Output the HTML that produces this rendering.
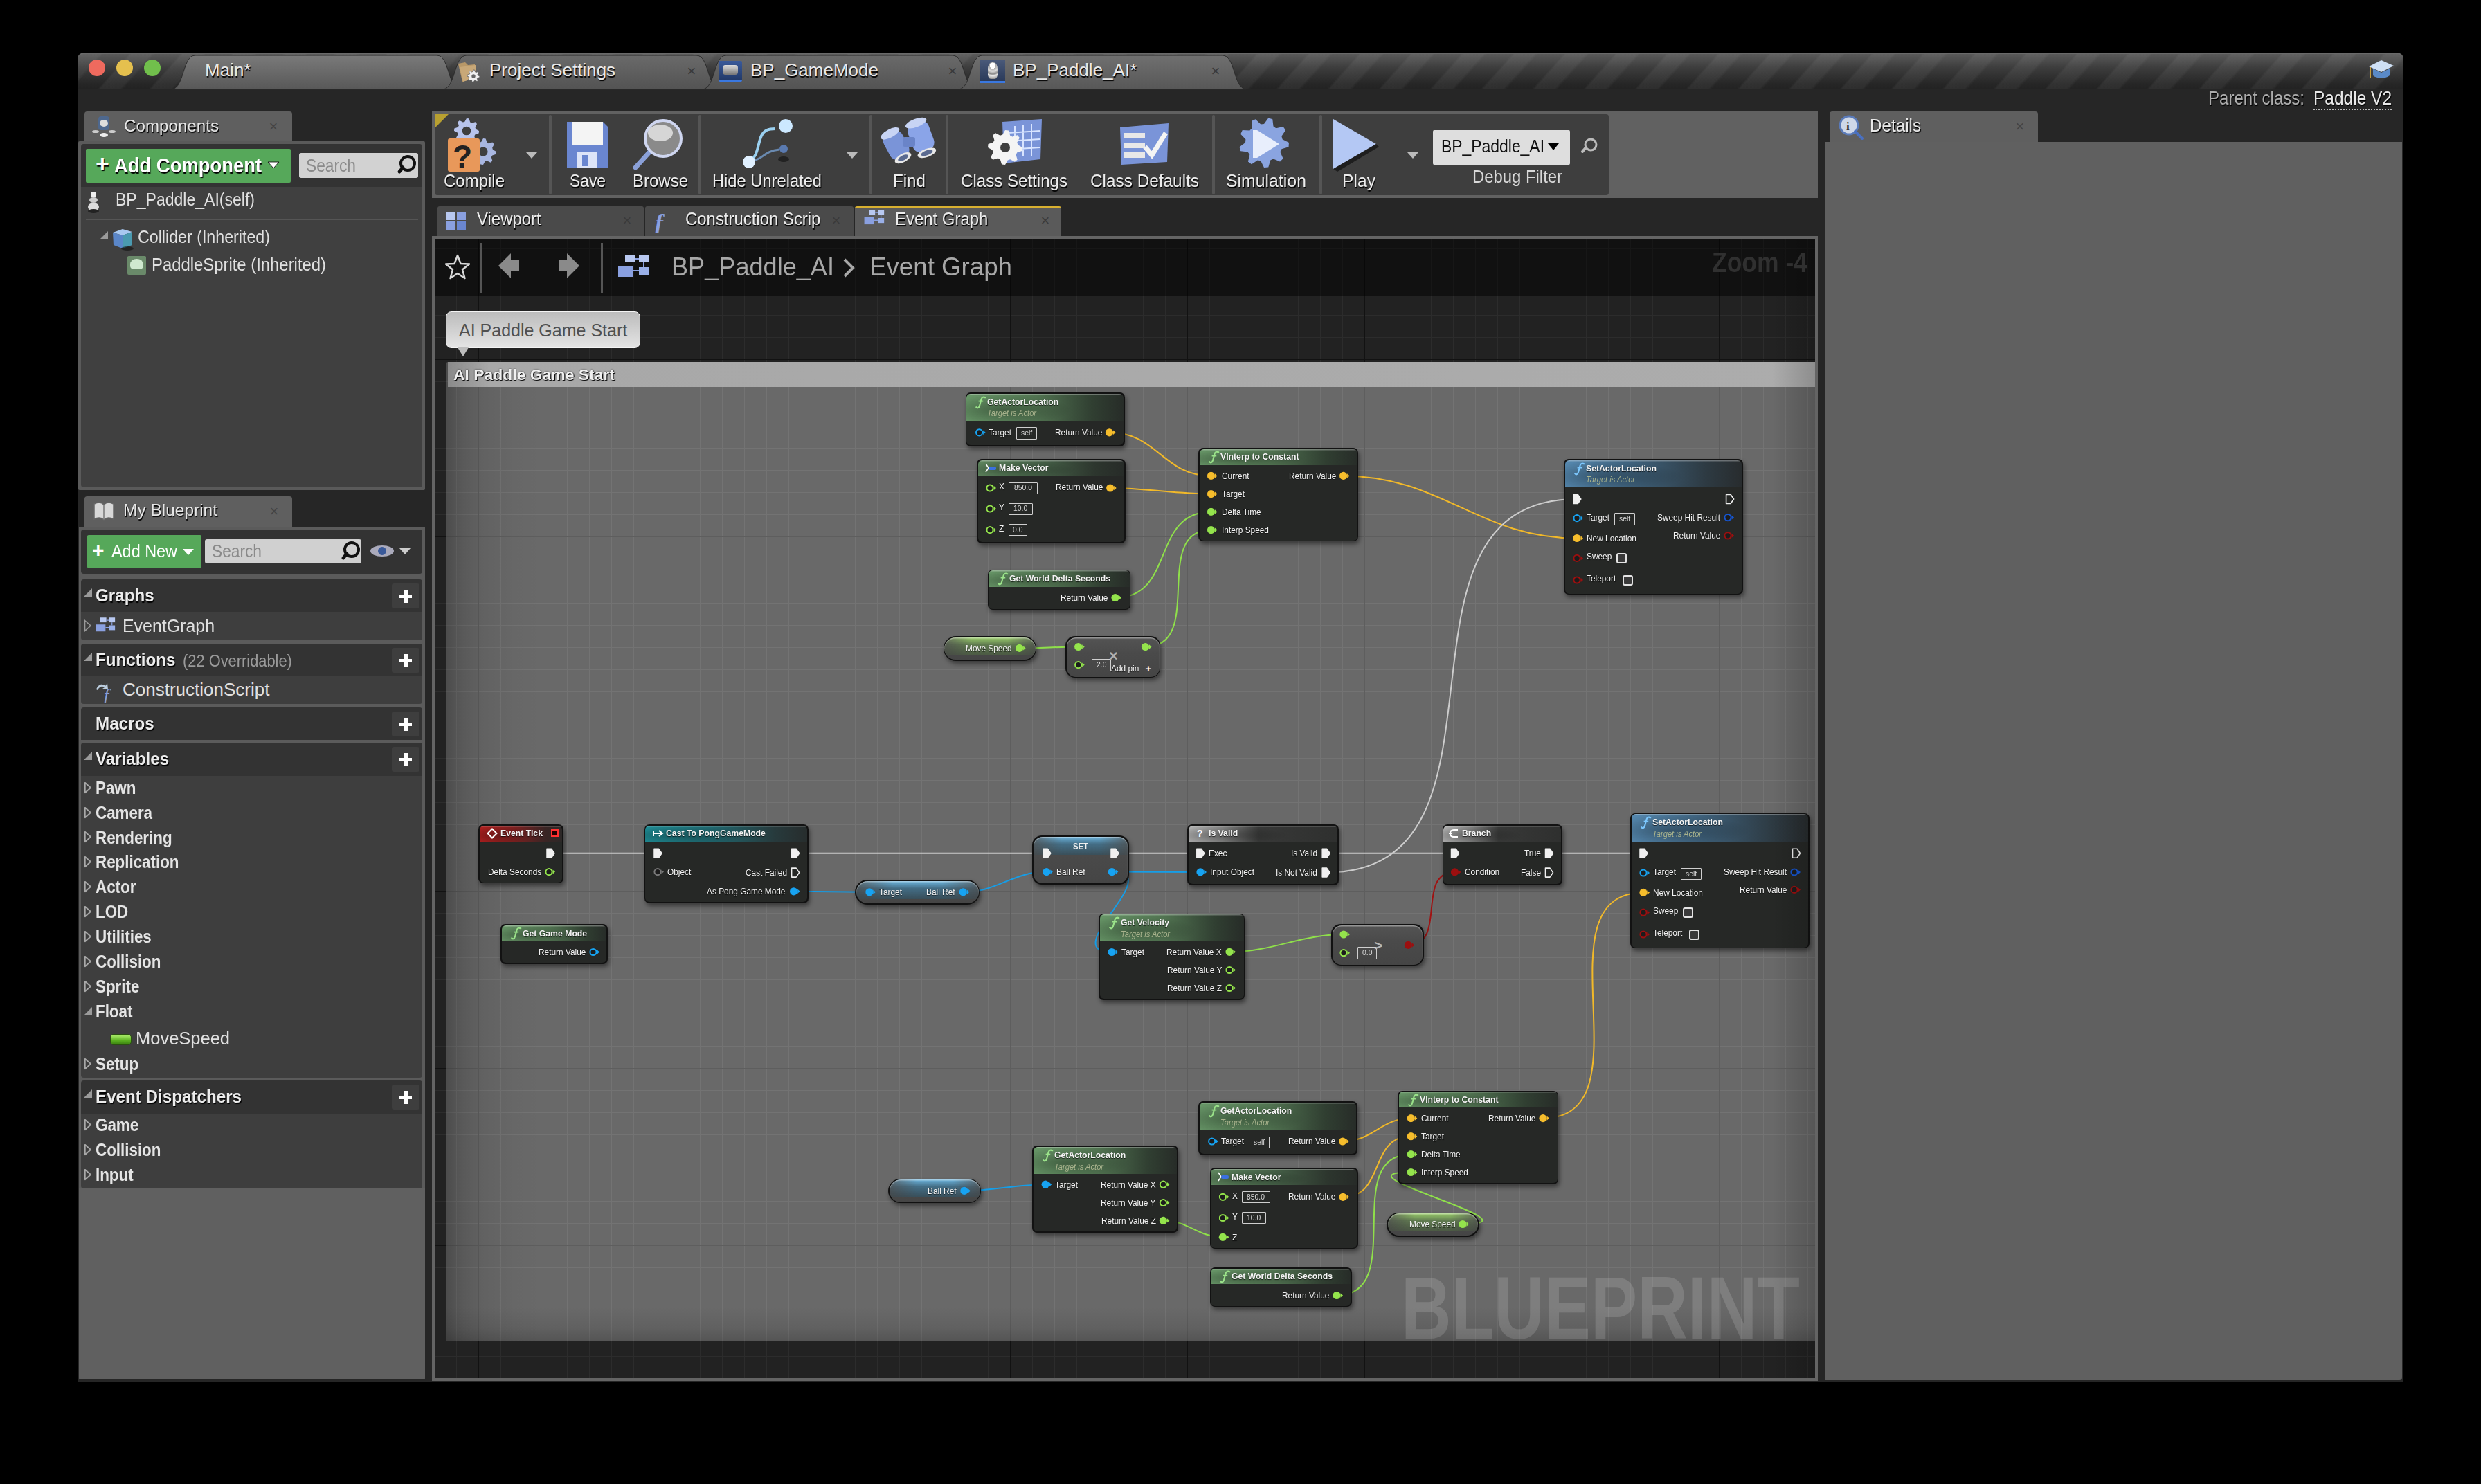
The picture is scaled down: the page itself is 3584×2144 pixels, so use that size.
<!DOCTYPE html><html><head><meta charset="utf-8"><style>html,body{margin:0;padding:0;background:#000;width:3584px;height:2144px;overflow:hidden;}body{position:relative;font-family:"Liberation Sans",sans-serif;}</style></head><body><div style="position:absolute;left:112.0px;top:76.0px;width:3360.0px;height:1920.0px;background:#262626;border-radius:9px 9px 0 0;overflow:hidden;"></div><div style="position:absolute;left:112.0px;top:76.0px;width:3360.0px;height:53.0px;border-radius:9px 9px 0 0;background:repeating-linear-gradient(132deg, rgba(255,255,255,0) 0px, rgba(255,255,255,0.055) 3px, rgba(255,255,255,0.05) 24px, rgba(255,255,255,0) 28px, rgba(255,255,255,0) 55px),linear-gradient(#5a5a5a,#3c3c3c 40%,#262626 85%,#222);border-top:2px solid #6a6a6a;box-sizing:border-box;"></div><div style="position:absolute;left:128.0px;top:86.0px;width:24.0px;height:24.0px;background:#ef6a5e;border-radius:50%;"></div><div style="position:absolute;left:168.0px;top:86.0px;width:24.0px;height:24.0px;background:#e5c04e;border-radius:50%;"></div><div style="position:absolute;left:208.0px;top:86.0px;width:24.0px;height:24.0px;background:#71bf4c;border-radius:50%;"></div><svg style="position:absolute;left:0;top:0" width="3584" height="140"><defs><linearGradient id="tg248" x1="0" y1="0" x2="0" y2="1"><stop offset="0" stop-color="#7a7a7a"/><stop offset="1" stop-color="#585858"/></linearGradient></defs><path d="M248.0,129 C266.7,127 263.3,80 282.0,80 L631.0,80 C649.7,80 646.3,127 665.0,129 Z" fill="url(#tg248)" stroke="#2a2a2a" stroke-width="1"/></svg><div style="position:absolute;left:296.0px;top:87.0px;font-size:26.00px;line-height:29.90px;font-weight:normal;font-style:normal;color:#e8e8e8;white-space:nowrap;text-shadow:1px 2px 1px #000;">Main*</div><svg style="position:absolute;left:0;top:0" width="3584" height="140"><defs><linearGradient id="tg640" x1="0" y1="0" x2="0" y2="1"><stop offset="0" stop-color="#6a6a6a"/><stop offset="1" stop-color="#535353"/></linearGradient></defs><path d="M640.0,129 C658.7,127 655.3,80 674.0,80 L1006.0,80 C1024.7,80 1021.3,127 1040.0,129 Z" fill="url(#tg640)" stroke="#2a2a2a" stroke-width="1"/></svg><svg style="position:absolute;left:660px;top:88px" width="36" height="34"><path d="M2,4 L12,2 L16,6 L26,5 L27,24 L8,30 Z" fill="#b89868"/><path d="M4,9 L27,6 L28,24 L9,30 Z" fill="#c8a878"/><path d="M33.0,22.0 L32.8,23.8 L30.0,24.5 L29.4,25.6 L30.4,28.4 L29.0,29.5 L26.5,28.0 L25.3,28.4 L24.0,31.0 L22.2,30.8 L21.5,28.0 L20.4,27.4 L17.6,28.4 L16.5,27.0 L18.0,24.5 L17.6,23.3 L15.0,22.0 L15.2,20.2 L18.0,19.5 L18.6,18.4 L17.6,15.6 L19.0,14.5 L21.5,16.0 L22.7,15.6 L24.0,13.0 L25.8,13.2 L26.5,16.0 L27.6,16.6 L30.4,15.6 L31.5,17.0 L30.0,19.5 L30.4,20.7 Z" fill="#f0f0f0" stroke="#555" stroke-width="0.8"/><circle cx="24.0" cy="22.0" r="2.7" fill="#666"/></svg><div style="position:absolute;left:707.0px;top:87.0px;font-size:26.00px;line-height:29.90px;font-weight:normal;font-style:normal;color:#e8e8e8;white-space:nowrap;text-shadow:1px 2px 1px #000;">Project Settings</div><div style="position:absolute;left:992.6px;top:90.3px;font-size:22.00px;line-height:25.30px;font-weight:normal;font-style:normal;color:#3a3a3a;white-space:nowrap;">×</div><svg style="position:absolute;left:0;top:0" width="3584" height="140"><defs><linearGradient id="tg1015" x1="0" y1="0" x2="0" y2="1"><stop offset="0" stop-color="#6a6a6a"/><stop offset="1" stop-color="#535353"/></linearGradient></defs><path d="M1015.0,129 C1033.7,127 1030.3,80 1049.0,80 L1376.0,80 C1394.7,80 1391.3,127 1410.0,129 Z" fill="url(#tg1015)" stroke="#2a2a2a" stroke-width="1"/></svg><div style="position:absolute;left:1038.0px;top:88.0px;width:34.0px;height:30.0px;background:linear-gradient(#3a5a9a,#223a6a);border-radius:2px;border-bottom:3px solid #3a78e0;box-sizing:border-box;"><div style="position:absolute;left:6.0px;top:6.0px;width:22.0px;height:14.0px;background:linear-gradient(#ddd,#777);border-radius:4px;"></div></div><div style="position:absolute;left:1084.0px;top:87.0px;font-size:26.00px;line-height:29.90px;font-weight:normal;font-style:normal;color:#e8e8e8;white-space:nowrap;text-shadow:1px 2px 1px #000;">BP_GameMode</div><div style="position:absolute;left:1369.6px;top:90.3px;font-size:22.00px;line-height:25.30px;font-weight:normal;font-style:normal;color:#3a3a3a;white-space:nowrap;">×</div><svg style="position:absolute;left:0;top:0" width="3584" height="140"><defs><linearGradient id="tg1385" x1="0" y1="0" x2="0" y2="1"><stop offset="0" stop-color="#707070"/><stop offset="1" stop-color="#575757"/></linearGradient></defs><path d="M1385.0,129 C1403.7,127 1400.3,80 1419.0,80 L1766.0,80 C1784.7,80 1781.3,127 1800.0,129 Z" fill="url(#tg1385)" stroke="#2a2a2a" stroke-width="1"/></svg><div style="position:absolute;left:1416.0px;top:86.0px;width:36.0px;height:34.0px;background:linear-gradient(#4a5a7a,#2a3a5a);border-bottom:3px solid #3a78e0;box-sizing:border-box;"><div style="position:absolute;left:11.0px;top:4.0px;width:14.0px;height:24.0px;background:radial-gradient(circle at 50% 20%,#fff 20%,#aaa 22%,#ddd 40%,#888 60%,#eee 70%,#777 100%);border-radius:40% 40% 30% 30%;"></div></div><div style="position:absolute;left:1463.0px;top:87.0px;font-size:26.00px;line-height:29.90px;font-weight:normal;font-style:normal;color:#e8e8e8;white-space:nowrap;text-shadow:1px 2px 1px #000;">BP_Paddle_AI*</div><div style="position:absolute;left:1749.6px;top:90.3px;font-size:22.00px;line-height:25.30px;font-weight:normal;font-style:normal;color:#3a3a3a;white-space:nowrap;">×</div><svg style="position:absolute;left:3418px;top:82px" width="42" height="36"><path d="M4,14 L22,5 L40,13 L22,22 Z" fill="#cfe0f5"/><path d="M10,17 L10,27 C16,32 28,32 34,27 L34,17 L22,23 Z" fill="#5a8ac8"/><path d="M6,15 L6,31" stroke="#c8a040" stroke-width="2"/></svg><div style="position:absolute;left:3190.0px;top:125.9px;font-size:28.00px;line-height:32.20px;font-weight:normal;font-style:normal;color:#acacac;white-space:nowrap;transform:scaleX(0.8588);transform-origin:0 50%;text-shadow:1px 2px 1px #000;">Parent class:</div><div style="position:absolute;left:3342.0px;top:125.9px;font-size:28.00px;line-height:32.20px;font-weight:normal;font-style:normal;color:#e8e8e8;white-space:nowrap;transform:scaleX(0.8745);transform-origin:0 50%;text-shadow:1px 2px 1px #000;">Paddle V2</div><div style="position:absolute;left:3342.0px;top:157.0px;width:113.0px;height:1.0px;border-top:2px dotted #bbb;"></div><div style="position:absolute;left:122.0px;top:161.0px;width:300.0px;height:44.0px;background:#5f5f5f;border-radius:4px 4px 0 0;"></div><svg style="position:absolute;left:132px;top:166px" width="36" height="36"><rect x="10" y="2" width="16" height="20" rx="4" fill="#4a6a9a" opacity="0.8"/><ellipse cx="18" cy="12" rx="6" ry="5" fill="#ddd"/><ellipse cx="18" cy="29" rx="6" ry="3" fill="#eee"/><ellipse cx="6" cy="24" rx="5" ry="2" fill="#ccc"/><ellipse cx="30" cy="24" rx="5" ry="2" fill="#ccc"/></svg><div style="position:absolute;left:179.0px;top:168.2px;font-size:24.00px;line-height:27.60px;font-weight:normal;font-style:normal;color:#e6e6e6;white-space:nowrap;transform:scaleX(1.0067);transform-origin:0 50%;text-shadow:1px 2px 1px #000;">Components</div><div style="position:absolute;left:388.6px;top:170.3px;font-size:22.00px;line-height:25.30px;font-weight:normal;font-style:normal;color:#444;white-space:nowrap;">×</div><div style="position:absolute;left:113.0px;top:204.0px;width:501.0px;height:504.0px;background:#5a5a5a;border-radius:2px;"></div><div style="position:absolute;left:117.0px;top:208.0px;width:493.0px;height:62.0px;background:#333;border-radius:4px 4px 0 0;"></div><div style="position:absolute;left:117.0px;top:270.0px;width:493.0px;height:434.0px;background:#404040;border-radius:0 0 4px 4px;"></div><div style="position:absolute;left:124.0px;top:215.0px;width:296.0px;height:49.0px;background:#56a85a;border-radius:2px;"></div><div style="position:absolute;left:138.0px;top:219.4px;font-size:34.00px;line-height:39.10px;font-weight:bold;font-style:normal;color:#fff;white-space:nowrap;text-shadow:1px 2px 1px #000;margin-top:-2px;">+</div><div style="position:absolute;left:165.0px;top:221.8px;font-size:30.00px;line-height:34.50px;font-weight:bold;font-style:normal;color:#fff;white-space:nowrap;transform:scaleX(0.9130);transform-origin:0 50%;text-shadow:1px 2px 1px #000;">Add Component</div><svg style="position:absolute;left:386px;top:232px" width="20" height="14"><path d="M1,2 L17,2 L9,11 Z" fill="#fff" stroke="#000" stroke-width="0.8"/></svg><div style="position:absolute;left:432.0px;top:221.0px;width:172.0px;height:36.0px;background:#d2d2d2;border-radius:3px;"></div><div style="position:absolute;left:442.0px;top:224.6px;font-size:25.00px;line-height:28.75px;font-weight:normal;font-style:normal;color:#8a8a8a;white-space:nowrap;transform:scaleX(0.9089);transform-origin:0 50%;">Search</div><svg style="position:absolute;left:565px;top:220px" width="40" height="40"><circle cx="24" cy="16" r="10" fill="none" stroke="#111" stroke-width="4"/><path d="M17,22 L12,28" stroke="#111" stroke-width="5" stroke-linecap="round"/></svg><svg style="position:absolute;left:124px;top:274px" width="22" height="34"><circle cx="11" cy="7" r="4" fill="#eee"/><ellipse cx="11" cy="15" rx="6" ry="4" fill="#ccc"/><ellipse cx="11" cy="25" rx="8" ry="6" fill="#ddd"/><ellipse cx="11" cy="31" rx="8" ry="3" fill="#222"/></svg><div style="position:absolute;left:167.0px;top:274.1px;font-size:26.00px;line-height:29.90px;font-weight:normal;font-style:normal;color:#e0e0e0;white-space:nowrap;transform:scaleX(0.8858);transform-origin:0 50%;">BP_Paddle_AI(self)</div><div style="position:absolute;left:124.0px;top:316.0px;width:480.0px;height:2.0px;background:#555;"></div><svg style="position:absolute;left:143px;top:333px" width="14" height="14"><path d="M13,1 L13,13 L1,13 Z" fill="#9a9a9a"/></svg><svg style="position:absolute;left:160px;top:328px" width="36" height="34"><path d="M3,8 L17,3 L31,7 L17,12 Z" fill="#a8c8f0"/><path d="M3,8 L17,12 L17,31 L4,26 Z" fill="#5a86c8"/><path d="M17,12 L31,7 L31,26 L17,31 Z" fill="#4a9ab0"/><ellipse cx="24" cy="31" rx="9" ry="3" fill="#111" opacity="0.6"/></svg><div style="position:absolute;left:199.0px;top:328.1px;font-size:26.00px;line-height:29.90px;font-weight:normal;font-style:normal;color:#e0e0e0;white-space:nowrap;transform:scaleX(0.8930);transform-origin:0 50%;">Collider (Inherited)</div><div style="position:absolute;left:184.0px;top:370.0px;width:27.0px;height:27.0px;background:#6a8a6a;border-radius:2px;"><div style="position:absolute;left:4.0px;top:4.0px;width:19.0px;height:15.0px;background:#cfe8cf;border-radius:50% 50% 30% 30%;"></div></div><div style="position:absolute;left:219.0px;top:368.1px;font-size:26.00px;line-height:29.90px;font-weight:normal;font-style:normal;color:#e0e0e0;white-space:nowrap;transform:scaleX(0.9177);transform-origin:0 50%;">PaddleSprite (Inherited)</div><div style="position:absolute;left:122.0px;top:717.0px;width:300.0px;height:44.0px;background:#5f5f5f;border-radius:4px 4px 0 0;"></div><svg style="position:absolute;left:134px;top:722px" width="32" height="34"><path d="M2,6 C8,3 13,4 16,7 C19,4 24,3 30,6 L30,28 C24,25 19,26 16,29 C13,26 8,25 2,28 Z" fill="#d8d8d8" stroke="#666" stroke-width="1.5"/><path d="M16,7 L16,29" stroke="#777" stroke-width="1.5"/></svg><div style="position:absolute;left:178.0px;top:723.2px;font-size:24.00px;line-height:27.60px;font-weight:normal;font-style:normal;color:#e6e6e6;white-space:nowrap;transform:scaleX(1.0196);transform-origin:0 50%;text-shadow:1px 2px 1px #000;">My Blueprint</div><div style="position:absolute;left:389.6px;top:726.4px;font-size:22.00px;line-height:25.30px;font-weight:normal;font-style:normal;color:#444;white-space:nowrap;">×</div><div style="position:absolute;left:114.0px;top:761.0px;width:500.0px;height:1232.0px;background:#5b5b5b;"></div><div style="position:absolute;left:117.0px;top:765.0px;width:493.0px;height:64.0px;background:#333;border-radius:4px;"></div><div style="position:absolute;left:126.0px;top:773.0px;width:165.0px;height:48.0px;background:#56a85a;border-radius:2px;"></div><div style="position:absolute;left:133.0px;top:779.8px;font-size:30.00px;line-height:34.50px;font-weight:bold;font-style:normal;color:#fff;white-space:nowrap;margin-top:-2px;">+</div><div style="position:absolute;left:161.0px;top:782.0px;font-size:26.00px;line-height:29.90px;font-weight:normal;font-style:normal;color:#fff;white-space:nowrap;transform:scaleX(0.9005);transform-origin:0 50%;">Add New</div><svg style="position:absolute;left:263px;top:791px" width="20" height="14"><path d="M1,2 L17,2 L9,11 Z" fill="#fff"/></svg><div style="position:absolute;left:296.0px;top:779.0px;width:226.0px;height:35.0px;background:#d0d0d0;border-radius:3px;"></div><div style="position:absolute;left:306.0px;top:781.6px;font-size:25.00px;line-height:28.75px;font-weight:normal;font-style:normal;color:#8a8a8a;white-space:nowrap;transform:scaleX(0.9089);transform-origin:0 50%;">Search</div><svg style="position:absolute;left:484px;top:778px" width="40" height="40"><circle cx="24" cy="16" r="10" fill="none" stroke="#111" stroke-width="4"/><path d="M17,22 L12,28" stroke="#111" stroke-width="5" stroke-linecap="round"/></svg><svg style="position:absolute;left:533px;top:784px" width="66" height="24"><ellipse cx="19" cy="12" rx="17" ry="8" fill="#aab"/><circle cx="19" cy="12" r="6" fill="#3a5a9a"/><path d="M44,8 L60,8 L52,17 Z" fill="#ccc"/></svg><div style="position:absolute;left:117.0px;top:837.0px;width:493.0px;height:47.0px;background:#333;border-radius:4px 4px 0 0;"></div><svg style="position:absolute;left:120px;top:849px" width="14" height="14"><path d="M13,1 L13,13 L1,13 Z" fill="#9a9a9a"/></svg><div style="position:absolute;left:138.0px;top:845.5px;font-size:26.00px;line-height:29.90px;font-weight:bold;font-style:normal;color:#ececec;white-space:nowrap;transform:scaleX(0.9300);transform-origin:0 50%;text-shadow:1px 2px 1px #000;">Graphs</div><div style="position:absolute;left:566.0px;top:843.0px;width:40.0px;height:36.0px;background:#3e3e3e;border-radius:3px;"></div><div style="position:absolute;left:577.0px;top:859.0px;width:18.0px;height:5.0px;background:#fff;"></div><div style="position:absolute;left:584.0px;top:852.0px;width:5.0px;height:19.0px;background:#fff;"></div><div style="position:absolute;left:117.0px;top:884.0px;width:493.0px;height:41.0px;background:#3e3e3e;border-radius:0 0 4px 4px;"></div><svg style="position:absolute;left:121px;top:895px" width="12" height="18"><path d="M1.5,1.5 L10,9 L1.5,16.5 Z" fill="none" stroke="#999" stroke-width="1.6"/></svg><svg style="position:absolute;left:137px;top:891px" width="32" height="25" viewBox="0 0 50 40"><rect x="12" y="2" width="14" height="11" fill="#b8c8f0"/><rect x="32" y="2" width="14" height="11" fill="#b8c8f0"/><rect x="2" y="18" width="22" height="16" fill="#8aa0e0"/><rect x="32" y="20" width="14" height="11" fill="#9ab0e8"/><path d="M26,8 L32,8 M39,13 L39,20 M24,25 L32,25" stroke="#8aa0e0" stroke-width="2"/></svg><div style="position:absolute;left:177.0px;top:890.0px;font-size:26.00px;line-height:29.90px;font-weight:normal;font-style:normal;color:#e0e0e0;white-space:nowrap;transform:scaleX(0.9586);transform-origin:0 50%;">EventGraph</div><div style="position:absolute;left:117.0px;top:930.0px;width:493.0px;height:47.0px;background:#333;border-radius:4px 4px 0 0;"></div><svg style="position:absolute;left:120px;top:942px" width="14" height="14"><path d="M13,1 L13,13 L1,13 Z" fill="#9a9a9a"/></svg><div style="position:absolute;left:138.0px;top:938.5px;font-size:26.00px;line-height:29.90px;font-weight:bold;font-style:normal;color:#ececec;white-space:nowrap;transform:scaleX(0.9300);transform-origin:0 50%;text-shadow:1px 2px 1px #000;">Functions</div><div style="position:absolute;left:263.5px;top:942.3px;font-size:23.00px;line-height:26.45px;font-weight:normal;font-style:normal;color:#9a9a9a;white-space:nowrap;transform:scaleX(0.9500);transform-origin:0 50%;">(22 Overridable)</div><div style="position:absolute;left:566.0px;top:936.0px;width:40.0px;height:36.0px;background:#3e3e3e;border-radius:3px;"></div><div style="position:absolute;left:577.0px;top:952.0px;width:18.0px;height:5.0px;background:#fff;"></div><div style="position:absolute;left:584.0px;top:945.0px;width:5.0px;height:19.0px;background:#fff;"></div><div style="position:absolute;left:117.0px;top:977.0px;width:493.0px;height:40.0px;background:#3e3e3e;border-radius:0 0 4px 4px;"></div><svg style="position:absolute;left:136px;top:982px" width="34" height="34"><path d="M3,14 C6,6 12,5 16,9 L19,5 L20,14 L12,13 L15,11 C12,9 8,9 5,15 Z" fill="#bcd"/><text x="14" y="31" font-family="Liberation Serif" font-style="italic" font-size="26" fill="#8aa0d8">f</text></svg><div style="position:absolute;left:177.0px;top:982.0px;font-size:26.00px;line-height:29.90px;font-weight:normal;font-style:normal;color:#e0e0e0;white-space:nowrap;">ConstructionScript</div><div style="position:absolute;left:117.0px;top:1022.0px;width:493.0px;height:47.0px;background:#333;border-radius:4px 4px 0 0;"></div><div style="position:absolute;left:138.0px;top:1030.5px;font-size:26.00px;line-height:29.90px;font-weight:bold;font-style:normal;color:#ececec;white-space:nowrap;transform:scaleX(0.9300);transform-origin:0 50%;text-shadow:1px 2px 1px #000;">Macros</div><div style="position:absolute;left:566.0px;top:1028.0px;width:40.0px;height:36.0px;background:#3e3e3e;border-radius:3px;"></div><div style="position:absolute;left:577.0px;top:1044.0px;width:18.0px;height:5.0px;background:#fff;"></div><div style="position:absolute;left:584.0px;top:1037.0px;width:5.0px;height:19.0px;background:#fff;"></div><div style="position:absolute;left:117.0px;top:1073.0px;width:493.0px;height:48.0px;background:#333;border-radius:4px 4px 0 0;"></div><svg style="position:absolute;left:120px;top:1085px" width="14" height="14"><path d="M13,1 L13,13 L1,13 Z" fill="#9a9a9a"/></svg><div style="position:absolute;left:138.0px;top:1082.0px;font-size:26.00px;line-height:29.90px;font-weight:bold;font-style:normal;color:#ececec;white-space:nowrap;transform:scaleX(0.9300);transform-origin:0 50%;text-shadow:1px 2px 1px #000;">Variables</div><div style="position:absolute;left:566.0px;top:1079.0px;width:40.0px;height:36.0px;background:#3e3e3e;border-radius:3px;"></div><div style="position:absolute;left:577.0px;top:1095.0px;width:18.0px;height:5.0px;background:#fff;"></div><div style="position:absolute;left:584.0px;top:1088.0px;width:5.0px;height:19.0px;background:#fff;"></div><div style="position:absolute;left:117.0px;top:1121.0px;width:493.0px;height:436.0px;background:#3e3e3e;border-radius:0 0 4px 4px;"></div><svg style="position:absolute;left:121.0px;top:1128.6px" width="12" height="18"><path d="M1.8,1.8 L10,9 L1.8,16.2 Z" fill="none" stroke="#a8a8a8" stroke-width="1.8" stroke-linejoin="round"/></svg><div style="position:absolute;left:138.0px;top:1123.6px;font-size:26.00px;line-height:29.90px;font-weight:bold;font-style:normal;color:#e4e4e4;white-space:nowrap;transform:scaleX(0.8600);transform-origin:0 50%;">Pawn</div><svg style="position:absolute;left:121.0px;top:1164.5px" width="12" height="18"><path d="M1.8,1.8 L10,9 L1.8,16.2 Z" fill="none" stroke="#a8a8a8" stroke-width="1.8" stroke-linejoin="round"/></svg><div style="position:absolute;left:138.0px;top:1159.5px;font-size:26.00px;line-height:29.90px;font-weight:bold;font-style:normal;color:#e4e4e4;white-space:nowrap;transform:scaleX(0.8600);transform-origin:0 50%;">Camera</div><svg style="position:absolute;left:121.0px;top:1200.4px" width="12" height="18"><path d="M1.8,1.8 L10,9 L1.8,16.2 Z" fill="none" stroke="#a8a8a8" stroke-width="1.8" stroke-linejoin="round"/></svg><div style="position:absolute;left:138.0px;top:1195.5px;font-size:26.00px;line-height:29.90px;font-weight:bold;font-style:normal;color:#e4e4e4;white-space:nowrap;transform:scaleX(0.8600);transform-origin:0 50%;">Rendering</div><svg style="position:absolute;left:121.0px;top:1236.3px" width="12" height="18"><path d="M1.8,1.8 L10,9 L1.8,16.2 Z" fill="none" stroke="#a8a8a8" stroke-width="1.8" stroke-linejoin="round"/></svg><div style="position:absolute;left:138.0px;top:1231.3px;font-size:26.00px;line-height:29.90px;font-weight:bold;font-style:normal;color:#e4e4e4;white-space:nowrap;transform:scaleX(0.8600);transform-origin:0 50%;">Replication</div><svg style="position:absolute;left:121.0px;top:1272.2px" width="12" height="18"><path d="M1.8,1.8 L10,9 L1.8,16.2 Z" fill="none" stroke="#a8a8a8" stroke-width="1.8" stroke-linejoin="round"/></svg><div style="position:absolute;left:138.0px;top:1267.2px;font-size:26.00px;line-height:29.90px;font-weight:bold;font-style:normal;color:#e4e4e4;white-space:nowrap;transform:scaleX(0.8600);transform-origin:0 50%;">Actor</div><svg style="position:absolute;left:121.0px;top:1308.1px" width="12" height="18"><path d="M1.8,1.8 L10,9 L1.8,16.2 Z" fill="none" stroke="#a8a8a8" stroke-width="1.8" stroke-linejoin="round"/></svg><div style="position:absolute;left:138.0px;top:1303.1px;font-size:26.00px;line-height:29.90px;font-weight:bold;font-style:normal;color:#e4e4e4;white-space:nowrap;transform:scaleX(0.8600);transform-origin:0 50%;">LOD</div><svg style="position:absolute;left:121.0px;top:1344.0px" width="12" height="18"><path d="M1.8,1.8 L10,9 L1.8,16.2 Z" fill="none" stroke="#a8a8a8" stroke-width="1.8" stroke-linejoin="round"/></svg><div style="position:absolute;left:138.0px;top:1339.0px;font-size:26.00px;line-height:29.90px;font-weight:bold;font-style:normal;color:#e4e4e4;white-space:nowrap;transform:scaleX(0.8600);transform-origin:0 50%;">Utilities</div><svg style="position:absolute;left:121.0px;top:1379.9px" width="12" height="18"><path d="M1.8,1.8 L10,9 L1.8,16.2 Z" fill="none" stroke="#a8a8a8" stroke-width="1.8" stroke-linejoin="round"/></svg><div style="position:absolute;left:138.0px;top:1375.0px;font-size:26.00px;line-height:29.90px;font-weight:bold;font-style:normal;color:#e4e4e4;white-space:nowrap;transform:scaleX(0.8600);transform-origin:0 50%;">Collision</div><svg style="position:absolute;left:121.0px;top:1415.8px" width="12" height="18"><path d="M1.8,1.8 L10,9 L1.8,16.2 Z" fill="none" stroke="#a8a8a8" stroke-width="1.8" stroke-linejoin="round"/></svg><div style="position:absolute;left:138.0px;top:1410.8px;font-size:26.00px;line-height:29.90px;font-weight:bold;font-style:normal;color:#e4e4e4;white-space:nowrap;transform:scaleX(0.8600);transform-origin:0 50%;">Sprite</div><svg style="position:absolute;left:121.0px;top:1528.0px" width="12" height="18"><path d="M1.8,1.8 L10,9 L1.8,16.2 Z" fill="none" stroke="#a8a8a8" stroke-width="1.8" stroke-linejoin="round"/></svg><div style="position:absolute;left:138.0px;top:1523.0px;font-size:26.00px;line-height:29.90px;font-weight:bold;font-style:normal;color:#e4e4e4;white-space:nowrap;transform:scaleX(0.8600);transform-origin:0 50%;">Setup</div><svg style="position:absolute;left:120px;top:1454px" width="14" height="14"><path d="M13,1 L13,13 L1,13 Z" fill="#9a9a9a"/></svg><div style="position:absolute;left:138.0px;top:1446.8px;font-size:26.00px;line-height:29.90px;font-weight:bold;font-style:normal;color:#e4e4e4;white-space:nowrap;transform:scaleX(0.8600);transform-origin:0 50%;">Float</div><div style="position:absolute;left:159.0px;top:1494.0px;width:29.0px;height:14.0px;background:linear-gradient(#b0f070,#5ab020 60%,#3a8010);border-radius:5px;border:1px solid #2a5010;"></div><div style="position:absolute;left:196.0px;top:1486.0px;font-size:26.00px;line-height:29.90px;font-weight:normal;font-style:normal;color:#e0e0e0;white-space:nowrap;transform:scaleX(0.9801);transform-origin:0 50%;">MoveSpeed</div><div style="position:absolute;left:117.0px;top:1561.0px;width:493.0px;height:48.0px;background:#333;border-radius:4px 4px 0 0;"></div><svg style="position:absolute;left:120px;top:1573px" width="14" height="14"><path d="M13,1 L13,13 L1,13 Z" fill="#9a9a9a"/></svg><div style="position:absolute;left:138.0px;top:1570.0px;font-size:26.00px;line-height:29.90px;font-weight:bold;font-style:normal;color:#ececec;white-space:nowrap;transform:scaleX(0.9300);transform-origin:0 50%;text-shadow:1px 2px 1px #000;">Event Dispatchers</div><div style="position:absolute;left:566.0px;top:1567.0px;width:40.0px;height:36.0px;background:#3e3e3e;border-radius:3px;"></div><div style="position:absolute;left:577.0px;top:1583.0px;width:18.0px;height:5.0px;background:#fff;"></div><div style="position:absolute;left:584.0px;top:1576.0px;width:5.0px;height:19.0px;background:#fff;"></div><div style="position:absolute;left:117.0px;top:1609.0px;width:493.0px;height:108.0px;background:#3e3e3e;border-radius:0 0 4px 4px;"></div><svg style="position:absolute;left:121.0px;top:1616.0px" width="12" height="18"><path d="M1.8,1.8 L10,9 L1.8,16.2 Z" fill="none" stroke="#a8a8a8" stroke-width="1.8" stroke-linejoin="round"/></svg><div style="position:absolute;left:138.0px;top:1611.0px;font-size:26.00px;line-height:29.90px;font-weight:bold;font-style:normal;color:#e4e4e4;white-space:nowrap;transform:scaleX(0.8600);transform-origin:0 50%;">Game</div><svg style="position:absolute;left:121.0px;top:1652.0px" width="12" height="18"><path d="M1.8,1.8 L10,9 L1.8,16.2 Z" fill="none" stroke="#a8a8a8" stroke-width="1.8" stroke-linejoin="round"/></svg><div style="position:absolute;left:138.0px;top:1647.0px;font-size:26.00px;line-height:29.90px;font-weight:bold;font-style:normal;color:#e4e4e4;white-space:nowrap;transform:scaleX(0.8600);transform-origin:0 50%;">Collision</div><svg style="position:absolute;left:121.0px;top:1688.0px" width="12" height="18"><path d="M1.8,1.8 L10,9 L1.8,16.2 Z" fill="none" stroke="#a8a8a8" stroke-width="1.8" stroke-linejoin="round"/></svg><div style="position:absolute;left:138.0px;top:1683.0px;font-size:26.00px;line-height:29.90px;font-weight:bold;font-style:normal;color:#e4e4e4;white-space:nowrap;transform:scaleX(0.8600);transform-origin:0 50%;">Input</div><div style="position:absolute;left:114.0px;top:1717.0px;width:500.0px;height:276.0px;background:#606060;border-radius:0 0 4px 4px;"></div><div style="position:absolute;left:2643.0px;top:161.0px;width:301.0px;height:44.0px;background:#5f5f5f;border-radius:4px 4px 0 0;"></div><svg style="position:absolute;left:2654px;top:164px" width="40" height="40"><circle cx="17" cy="17" r="13" fill="#cfd8e8" stroke="#5a7ab8" stroke-width="3"/><path d="M26,26 L36,36" stroke="#4a70c0" stroke-width="4" stroke-linecap="round"/><text x="13" y="24" font-family="Liberation Serif" font-weight="bold" font-size="17" fill="#333">i</text></svg><div style="position:absolute;left:2701.0px;top:166.6px;font-size:25.00px;line-height:28.75px;font-weight:normal;font-style:normal;color:#e8e8e8;white-space:nowrap;transform:scaleX(0.9684);transform-origin:0 50%;text-shadow:1px 2px 1px #000;">Details</div><div style="position:absolute;left:2911.6px;top:170.3px;font-size:22.00px;line-height:25.30px;font-weight:normal;font-style:normal;color:#444;white-space:nowrap;">×</div><div style="position:absolute;left:2636.0px;top:205.0px;width:834.0px;height:1789.0px;background:#606060;border-radius:0 0 4px 0;"></div><div style="position:absolute;left:624.0px;top:161.0px;width:2002.0px;height:125.0px;background:#616161;"></div><div style="position:absolute;left:628.0px;top:165.0px;width:1696.0px;height:117.0px;background:#3e3e3e;border-radius:4px;"></div><svg style="position:absolute;left:628px;top:165px" width="22" height="22"><path d="M0,0 L20,0 L0,20 Z" fill="#b8a030"/></svg><div style="position:absolute;left:793.0px;top:166.0px;width:4.0px;height:115.0px;background:#555;border-radius:2px;"></div><div style="position:absolute;left:1009.0px;top:166.0px;width:4.0px;height:115.0px;background:#555;border-radius:2px;"></div><div style="position:absolute;left:1256.0px;top:166.0px;width:4.0px;height:115.0px;background:#555;border-radius:2px;"></div><div style="position:absolute;left:1366.0px;top:166.0px;width:4.0px;height:115.0px;background:#555;border-radius:2px;"></div><div style="position:absolute;left:1751.0px;top:166.0px;width:4.0px;height:115.0px;background:#555;border-radius:2px;"></div><div style="position:absolute;left:1906.0px;top:166.0px;width:4.0px;height:115.0px;background:#555;border-radius:2px;"></div><svg style="position:absolute;left:640px;top:168px" width="80" height="84"><path d="M52.0,21.0 L51.7,24.5 L46.5,26.2 L45.2,28.5 L46.7,33.7 L44.0,36.0 L39.2,33.5 L36.6,34.2 L34.0,39.0 L30.5,38.7 L28.8,33.5 L26.5,32.2 L21.3,33.7 L19.0,31.0 L21.5,26.2 L20.8,23.6 L16.0,21.0 L16.3,17.5 L21.5,15.8 L22.8,13.5 L21.3,8.3 L24.0,6.0 L28.8,8.5 L31.4,7.8 L34.0,3.0 L37.5,3.3 L39.2,8.5 L41.5,9.8 L46.7,8.3 L49.0,11.0 L46.5,15.8 L47.2,18.4 Z" fill="#b8c4ec" /><circle cx="34.0" cy="21.0" r="6.3" fill="#3e3e3e"/><path d="M77.0,51.0 L76.6,54.7 L71.2,56.5 L69.8,58.9 L71.4,64.4 L68.6,66.8 L63.5,64.2 L60.8,65.0 L58.0,70.0 L54.3,69.6 L52.5,64.2 L50.1,62.8 L44.6,64.4 L42.2,61.6 L44.8,56.5 L44.0,53.8 L39.0,51.0 L39.4,47.3 L44.8,45.5 L46.2,43.1 L44.6,37.6 L47.4,35.2 L52.5,37.8 L55.2,37.0 L58.0,32.0 L61.7,32.4 L63.5,37.8 L65.9,39.2 L71.4,37.6 L73.8,40.4 L71.2,45.5 L72.0,48.2 Z" fill="#a8b6e0" /><circle cx="58.0" cy="51.0" r="6.6" fill="#3e3e3e"/><rect x="7" y="32" width="46" height="48" rx="3" fill="#e8985a"/><text x="14" y="74" font-family="Liberation Sans" font-weight="bold" font-size="46" fill="#222">?</text></svg><div style="position:absolute;left:641.0px;top:247.1px;font-size:26.00px;line-height:29.90px;font-weight:normal;font-style:normal;color:#ececec;white-space:nowrap;transform:scaleX(0.9227);transform-origin:0 50%;text-shadow:1px 2px 1px #000;">Compile</div><svg style="position:absolute;left:758px;top:219px" width="20" height="12"><path d="M2,1 L18,1 L10,10 Z" fill="#bbb"/></svg><svg style="position:absolute;left:817px;top:172px" width="66" height="74"><path d="M2,4 L54,4 L62,12 L62,70 L2,70 Z" fill="#6a86d0"/><rect x="10" y="4" width="44" height="34" fill="#f4f4f4"/><rect x="16" y="48" width="30" height="22" fill="#dde4f8"/><rect x="24" y="52" width="8" height="16" fill="#6a86d0"/></svg><div style="position:absolute;left:823.0px;top:247.1px;font-size:26.00px;line-height:29.90px;font-weight:normal;font-style:normal;color:#ececec;white-space:nowrap;transform:scaleX(0.8774);transform-origin:0 50%;text-shadow:1px 2px 1px #000;">Save</div><svg style="position:absolute;left:914px;top:168px" width="82" height="80"><path d="M24,52 L4,74" stroke="#8aa0d8" stroke-width="7" stroke-linecap="round"/><circle cx="44" cy="32" r="26" fill="#8a8a8a" stroke="#cfd6f0" stroke-width="4"/><ellipse cx="40" cy="24" rx="18" ry="12" fill="#e8e8e8" opacity="0.8"/></svg><div style="position:absolute;left:914.0px;top:247.1px;font-size:26.00px;line-height:29.90px;font-weight:normal;font-style:normal;color:#ececec;white-space:nowrap;transform:scaleX(0.9227);transform-origin:0 50%;text-shadow:1px 2px 1px #000;">Browse</div><svg style="position:absolute;left:1066px;top:168px" width="90" height="80"><path d="M14,66 C30,60 28,40 34,28 C38,20 44,18 54,18" stroke="#9ad0f0" stroke-width="4" fill="none"/><path d="M22,64 C36,62 38,50 60,48" stroke="#6a8ab0" stroke-width="3" fill="none"/><circle cx="69" cy="14" r="10" fill="#cce8ff"/><circle cx="16" cy="66" r="9" fill="#e0f0ff"/><circle cx="66" cy="47" r="6" fill="#5a7ab0"/><ellipse cx="66" cy="62" rx="8" ry="4" fill="#222"/></svg><div style="position:absolute;left:1029.0px;top:247.1px;font-size:26.00px;line-height:29.90px;font-weight:normal;font-style:normal;color:#ececec;white-space:nowrap;transform:scaleX(0.9110);transform-origin:0 50%;text-shadow:1px 2px 1px #000;">Hide Unrelated</div><svg style="position:absolute;left:1221px;top:219px" width="20" height="12"><path d="M2,1 L18,1 L10,10 Z" fill="#bbb"/></svg><svg style="position:absolute;left:1272px;top:168px" width="84" height="76"><g transform="rotate(-28 24 42)"><rect x="8" y="20" width="30" height="42" rx="12" fill="#7a94d8"/><ellipse cx="23" cy="22" rx="15" ry="6" fill="#c8d4f4"/><ellipse cx="23" cy="62" rx="13" ry="6" fill="#e8e8e8"/><ellipse cx="23" cy="62" rx="8" ry="3.5" fill="#5a6a90"/></g><g transform="rotate(-20 60 34)"><rect x="44" y="6" width="32" height="46" rx="13" fill="#8aa4e8"/><ellipse cx="60" cy="8" rx="16" ry="6" fill="#c8d4f4"/><ellipse cx="60" cy="54" rx="14" ry="6" fill="#e8e8e8"/><ellipse cx="60" cy="54" rx="9" ry="3.5" fill="#5a6a90"/></g><rect x="32" y="30" width="18" height="14" rx="3" fill="#6a84c8"/></svg><div style="position:absolute;left:1289.5px;top:247.1px;font-size:26.00px;line-height:29.90px;font-weight:normal;font-style:normal;color:#ececec;white-space:nowrap;transform:scaleX(0.9292);transform-origin:0 50%;text-shadow:1px 2px 1px #000;">Find</div><svg style="position:absolute;left:1420px;top:168px" width="90" height="80"><path d="M28,8 L85,4 L83,62 L30,68 Z" fill="#7a94d8"/><path d="M46,14 L46,60 M58,12 L58,58 M70,11 L70,57 M36,24 L82,21 M36,36 L82,33 M36,48 L82,45" stroke="#d8e4ff" stroke-width="2"/><path d="M57.0,45.0 L56.5,49.9 L49.3,52.2 L47.6,55.4 L49.7,62.7 L45.9,65.8 L39.2,62.3 L35.7,63.4 L32.0,70.0 L27.1,69.5 L24.8,62.3 L21.6,60.6 L14.3,62.7 L11.2,58.9 L14.7,52.2 L13.6,48.7 L7.0,45.0 L7.5,40.1 L14.7,37.8 L16.4,34.6 L14.3,27.3 L18.1,24.2 L24.8,27.7 L28.3,26.6 L32.0,20.0 L36.9,20.5 L39.2,27.7 L42.4,29.4 L49.7,27.3 L52.8,31.1 L49.3,37.8 L50.4,41.3 Z" fill="#f4f4f4" /><circle cx="32.0" cy="45.0" r="7.0" fill="#3e3e3e"/></svg><div style="position:absolute;left:1388.0px;top:247.1px;font-size:26.00px;line-height:29.90px;font-weight:normal;font-style:normal;color:#ececec;white-space:nowrap;transform:scaleX(0.9267);transform-origin:0 50%;text-shadow:1px 2px 1px #000;">Class Settings</div><svg style="position:absolute;left:1612px;top:168px" width="84" height="80"><path d="M6,16 L76,10 L74,66 L8,70 Z" fill="#7a94d8"/><rect x="12" y="24" width="30" height="8" fill="#e8e8e8"/><rect x="12" y="38" width="30" height="8" fill="#e8e8e8"/><rect x="12" y="52" width="30" height="8" fill="#e8e8e8"/><path d="M42,44 L52,56 L72,24" stroke="#f4f4f4" stroke-width="7" fill="none"/></svg><div style="position:absolute;left:1575.1px;top:247.1px;font-size:26.00px;line-height:29.90px;font-weight:normal;font-style:normal;color:#ececec;white-space:nowrap;transform:scaleX(0.9366);transform-origin:0 50%;text-shadow:1px 2px 1px #000;">Class Defaults</div><svg style="position:absolute;left:1786px;top:168px" width="86" height="80"><path d="M76.0,38.0 L75.5,44.3 L65.4,47.2 L63.4,51.5 L67.6,61.1 L63.1,65.6 L53.5,61.4 L49.2,63.4 L46.3,73.5 L40.0,74.0 L35.3,64.6 L30.8,63.4 L22.0,69.2 L16.9,65.6 L19.3,55.4 L16.6,51.5 L6.2,50.3 L4.5,44.3 L13.0,38.0 L13.4,33.3 L6.2,25.7 L8.8,20.0 L19.3,20.6 L22.6,17.3 L22.0,6.8 L27.7,4.2 L35.3,11.4 L40.0,11.0 L46.3,2.5 L52.3,4.2 L53.5,14.6 L57.4,17.3 L67.6,14.9 L71.2,20.0 L65.4,28.8 L66.6,33.3 Z" fill="#8aa4e0" /><circle cx="40.0" cy="38.0" r="0.0" fill="#3e3e3e"/><path d="M30,20 L62,40 L30,60 Z" fill="#e8eefc"/><rect x="24" y="20" width="6" height="40" fill="#e8eefc"/></svg><div style="position:absolute;left:1771.0px;top:247.1px;font-size:26.00px;line-height:29.90px;font-weight:normal;font-style:normal;color:#ececec;white-space:nowrap;transform:scaleX(0.9555);transform-origin:0 50%;text-shadow:1px 2px 1px #000;">Simulation</div><svg style="position:absolute;left:1922px;top:168px" width="80" height="84"><path d="M4,4 L66,40 L4,76 Z" fill="#b4c8f4"/><path d="M4,76 L66,40 L70,44 L10,80 Z" fill="#111" opacity="0.7"/></svg><div style="position:absolute;left:1938.7px;top:247.1px;font-size:26.00px;line-height:29.90px;font-weight:normal;font-style:normal;color:#ececec;white-space:nowrap;transform:scaleX(0.9490);transform-origin:0 50%;text-shadow:1px 2px 1px #000;">Play</div><svg style="position:absolute;left:2031px;top:219px" width="20" height="12"><path d="M2,1 L18,1 L10,10 Z" fill="#bbb"/></svg><div style="position:absolute;left:2070.0px;top:188.0px;width:198.0px;height:50.0px;background:#dedede;border-radius:2px;"></div><div style="position:absolute;left:2082.0px;top:197.1px;font-size:26.00px;line-height:29.90px;font-weight:normal;font-style:normal;color:#111;white-space:nowrap;transform:scaleX(0.8810);transform-origin:0 50%;">BP_Paddle_AI</div><svg style="position:absolute;left:2235px;top:206px" width="20" height="14"><path d="M1,1 L17,1 L9,11 Z" fill="#000"/></svg><div style="position:absolute;left:2127.0px;top:240.6px;font-size:25.00px;line-height:28.75px;font-weight:normal;font-style:normal;color:#d8d8d8;white-space:nowrap;transform:scaleX(0.9547);transform-origin:0 50%;">Debug Filter</div><svg style="position:absolute;left:2276px;top:195px" width="36" height="36"><circle cx="22" cy="14" r="8" fill="none" stroke="#bbb" stroke-width="3"/><path d="M15,18 L10,24" stroke="#bbb" stroke-width="4" stroke-linecap="round"/></svg><div style="position:absolute;left:632.0px;top:298.0px;width:298.0px;height:43.0px;background:#4a4a4a;border-radius:3px 3px 0 0;"></div><div style="position:absolute;left:645.0px;top:306.0px;width:13.0px;height:12.0px;background:#b8c8f0;"></div><div style="position:absolute;left:660.0px;top:306.0px;width:13.0px;height:12.0px;background:#8aa0e0;"></div><div style="position:absolute;left:645.0px;top:320.0px;width:13.0px;height:12.0px;background:#8aa0e0;"></div><div style="position:absolute;left:660.0px;top:320.0px;width:13.0px;height:12.0px;background:#6a86d0;"></div><div style="position:absolute;left:689.0px;top:302.1px;font-size:26.00px;line-height:29.90px;font-weight:normal;font-style:normal;color:#ececec;white-space:nowrap;transform:scaleX(0.9200);transform-origin:0 50%;text-shadow:1px 2px 1px #000;">Viewport</div><div style="position:absolute;left:899.6px;top:306.4px;font-size:22.00px;line-height:25.30px;font-weight:normal;font-style:normal;color:#3a3a3a;white-space:nowrap;">×</div><div style="position:absolute;left:932.0px;top:298.0px;width:301.0px;height:43.0px;background:#4a4a4a;border-radius:3px 3px 0 0;"></div><div style="position:absolute;left:944px;top:301px;font-family:'Liberation Serif';font-style:italic;font-weight:bold;font-size:34px;line-height:38px;color:#8aa0e0;">ƒ</div><div style="position:absolute;left:990.0px;top:302.1px;font-size:26.00px;line-height:29.90px;font-weight:normal;font-style:normal;color:#ececec;white-space:nowrap;transform:scaleX(0.9200);transform-origin:0 50%;text-shadow:1px 2px 1px #000;">Construction Scrip</div><div style="position:absolute;left:1201.6px;top:306.4px;font-size:22.00px;line-height:25.30px;font-weight:normal;font-style:normal;color:#3a3a3a;white-space:nowrap;">×</div><div style="position:absolute;left:1235.0px;top:298.0px;width:298.0px;height:43.0px;background:#5a5a5a;border-radius:3px 3px 0 0;border-top:2px solid #d8b030;box-sizing:border-box;"></div><svg style="position:absolute;left:1247px;top:302px" width="33" height="26" viewBox="0 0 50 40"><rect x="12" y="2" width="14" height="11" fill="#b8c8f0"/><rect x="32" y="2" width="14" height="11" fill="#b8c8f0"/><rect x="2" y="18" width="22" height="16" fill="#8aa0e0"/><rect x="32" y="20" width="14" height="11" fill="#9ab0e8"/><path d="M26,8 L32,8 M39,13 L39,20 M24,25 L32,25" stroke="#8aa0e0" stroke-width="2"/></svg><div style="position:absolute;left:1293.0px;top:302.1px;font-size:26.00px;line-height:29.90px;font-weight:normal;font-style:normal;color:#ececec;white-space:nowrap;transform:scaleX(0.9200);transform-origin:0 50%;text-shadow:1px 2px 1px #000;">Event Graph</div><div style="position:absolute;left:1503.6px;top:306.4px;font-size:22.00px;line-height:25.30px;font-weight:normal;font-style:normal;color:#3a3a3a;white-space:nowrap;">×</div><div style="position:absolute;left:624.0px;top:341.0px;width:2002.0px;height:1654.0px;background:#646464;"></div><div style="position:absolute;left:628px;top:345px;width:1994px;height:1646px;overflow:hidden;background:linear-gradient(to right, #121212 1px, transparent 1px) 63px 174px / 256px 256px,linear-gradient(to bottom, #121212 1px, transparent 1px) 63px 174px / 256px 256px,linear-gradient(to right, #2c2c2c 1px, transparent 1px) 31px 14px / 32px 32px,linear-gradient(to bottom, #2c2c2c 1px, transparent 1px) 31px 14px / 32px 32px,#222;"><div style="position:absolute;left:-628px;top:-345px;width:3584px;height:2144px;"><div style="position:absolute;left:644.0px;top:450.0px;width:281.0px;height:53.0px;background:linear-gradient(#bcbcbc,#e4e4e4);border-radius:8px;border:1px solid #f4f4f4;box-sizing:border-box;"></div><svg style="position:absolute;left:658px;top:502px" width="22" height="16"><path d="M3,0 L19,0 L11,13 Z" fill="#bdbdbd"/></svg><div style="position:absolute;left:663.0px;top:462.6px;font-size:25.00px;line-height:28.75px;font-weight:normal;font-style:normal;color:#505050;white-space:nowrap;">AI Paddle Game Start</div><div style="position:absolute;left:644.0px;top:523.0px;width:1994.0px;height:1415.0px;background:linear-gradient(to right, #5e5e5e 1px, transparent 1px) 47px 252px / 256px 256px,linear-gradient(to bottom, #5e5e5e 1px, transparent 1px) 47px 252px / 256px 256px,linear-gradient(to right, #737373 1px, transparent 1px) 15px 28px / 32px 32px,linear-gradient(to bottom, #737373 1px, transparent 1px) 15px 28px / 32px 32px,#696969;border-radius:4px 0 0 4px;"></div><div style="position:absolute;left:644.0px;top:523.0px;width:140.0px;height:1415.0px;background:linear-gradient(to right, rgba(0,0,0,0.28) 0px, rgba(0,0,0,0.15) 25px, rgba(0,0,0,0.07) 55px, rgba(0,0,0,0.02) 100px, rgba(0,0,0,0) 140px);border-radius:4px 0 0 4px;"></div><div style="position:absolute;left:644.0px;top:1888.0px;width:1994.0px;height:50.0px;background:linear-gradient(to bottom, rgba(0,0,0,0) 0px, rgba(0,0,0,0.08) 30px, rgba(0,0,0,0.2) 50px);"></div><div style="position:absolute;left:647.0px;top:523.0px;width:1975.0px;height:36.0px;background:linear-gradient(to right,#8a8a8a,#a8a8a8 60px,#acacac);"></div><div style="position:absolute;left:655.0px;top:529.4px;font-size:22.00px;line-height:25.30px;font-weight:bold;font-style:normal;color:#f0f0f0;white-space:nowrap;transform:scaleX(1.0414);transform-origin:0 50%;text-shadow:1px 1px 1px #000,0 0 2px #333;">AI Paddle Game Start</div><div style="position:absolute;left:2024.0px;top:1816.4px;font-size:128.00px;line-height:147.20px;font-weight:bold;font-style:normal;color:rgba(255,255,255,0.14);white-space:nowrap;transform:scaleX(0.7864);transform-origin:0 50%;letter-spacing:0px;">BLUEPRINT</div><svg style="position:absolute;left:0;top:0" width="3584" height="2144"><path d="M1602.5,624.8 C1672.4,624.8 1679.6,687.4 1749.5,687.4" fill="none" stroke="#f2b929" stroke-width="2.0"/><path d="M1603.7,705.0 C1655.2,705.0 1698.0,713.6 1749.5,713.6" fill="none" stroke="#f2b929" stroke-width="2.0"/><path d="M1611.0,863.5 C1698.5,863.5 1662.0,739.4 1749.5,739.4" fill="none" stroke="#8fe04a" stroke-width="2.0"/><path d="M1654.5,934.5 C1742.5,934.5 1661.5,765.6 1749.5,765.6" fill="none" stroke="#8fe04a" stroke-width="2.0"/><path d="M1472.6,936.4 C1501.6,936.4 1528.7,934.5 1557.7,934.5" fill="none" stroke="#8fe04a" stroke-width="2.0"/><path d="M1940.6,687.4 C2083.1,687.4 2135.5,777.5 2278.0,777.5" fill="none" stroke="#f2b929" stroke-width="2.0"/><path d="M1915.2,1260.6 C2215.9,1260.6 1977.1,721.0 2277.8,721.0" fill="none" stroke="#cdcdcd" stroke-width="2.0"/><path d="M795.0,1232.8 C846.7,1232.8 898.3,1232.8 950.0,1232.8" fill="none" stroke="#cdcdcd" stroke-width="2.0"/><path d="M1148.6,1232.8 C1269.7,1232.8 1390.7,1232.8 1511.8,1232.8" fill="none" stroke="#cdcdcd" stroke-width="2.0"/><path d="M1610.0,1232.8 C1651.3,1232.8 1692.5,1232.8 1733.8,1232.8" fill="none" stroke="#cdcdcd" stroke-width="2.0"/><path d="M1915.2,1232.8 C1977.3,1232.8 2039.4,1232.8 2101.5,1232.8" fill="none" stroke="#cdcdcd" stroke-width="2.0"/><path d="M2237.5,1232.8 C2283.0,1232.8 2328.5,1232.8 2374.0,1232.8" fill="none" stroke="#cdcdcd" stroke-width="2.0"/><path d="M1146.6,1287.8 C1183.4,1287.8 1219.1,1288.8 1255.9,1288.8" fill="none" stroke="#159ee8" stroke-width="2.0"/><path d="M1391.3,1288.8 C1441.2,1288.8 1461.9,1259.6 1511.8,1259.6" fill="none" stroke="#159ee8" stroke-width="2.0"/><path d="M1606.3,1259.6 C1649.0,1259.6 1691.3,1259.9 1734.0,1259.9" fill="none" stroke="#159ee8" stroke-width="2.0"/><path d="M1606.3,1259.6 C1687.7,1259.6 1524.6,1375.5 1606.0,1375.5" fill="none" stroke="#159ee8" stroke-width="2.0"/><path d="M1776.0,1375.3 C1839.4,1375.3 1877.6,1350.0 1941.0,1350.0" fill="none" stroke="#8fe04a" stroke-width="2.0"/><path d="M2034.3,1365.4 C2091.9,1365.4 2043.9,1259.9 2101.5,1259.9" fill="none" stroke="#a01212" stroke-width="2.0"/><path d="M2229.0,1615.6 C2386.1,1615.6 2216.9,1289.4 2374.0,1289.4" fill="none" stroke="#f2b929" stroke-width="2.0"/><path d="M1392.9,1720.4 C1435.1,1720.4 1468.0,1711.2 1510.2,1711.2" fill="none" stroke="#159ee8" stroke-width="2.0"/><path d="M1680.4,1763.4 C1717.0,1763.4 1729.8,1787.3 1766.4,1787.3" fill="none" stroke="#8fe04a" stroke-width="2.0"/><path d="M1939.6,1649.0 C1983.6,1649.0 1994.3,1615.6 2038.3,1615.6" fill="none" stroke="#f2b929" stroke-width="2.0"/><path d="M1940.0,1729.3 C2002.0,1729.3 1976.3,1641.7 2038.3,1641.7" fill="none" stroke="#f2b929" stroke-width="2.0"/><path d="M1931.0,1871.5 C2034.7,1871.5 1934.6,1667.6 2038.3,1667.6" fill="none" stroke="#8fe04a" stroke-width="2.0"/><path d="M2113.0,1768.5 C2235.2,1768.5 1916.1,1693.5 2038.3,1693.5" fill="none" stroke="#8fe04a" stroke-width="2.0"/></svg><div style="position:absolute;left:1394.9px;top:567.0px;width:230.1px;height:77.9px;background:#121212;border-radius:7px;box-shadow:2px 4px 6px rgba(0,0,0,0.45);"></div><div style="position:absolute;left:1396.4px;top:568.5px;width:227.1px;height:74.9px;background:#262826;border-radius:6px;overflow:hidden;"><div style="position:absolute;left:0.0px;top:0.0px;width:227.1px;height:39.5px;background:radial-gradient(ellipse 45% 55% at 22% 60%, rgba(0,0,0,0.28), rgba(0,0,0,0) 100%),linear-gradient(to right, rgba(115,170,115,0.85) 0%, rgba(95,140,95,0.75) 45%, rgba(55,78,57,0.6) 80%, rgba(40,48,42,0.5) 100%);box-shadow:inset 0 1.5px 0 rgba(255,255,255,0.3);"></div></div><svg style="position:absolute;left:1409.4px;top:571.5px" width="16" height="19" viewBox="0 0 16 19"><path d="M1.2,16.2 C2.8,18.2 5.2,17.6 6.2,13.5 L8.6,4.6 C9.4,1.8 11.4,0.9 14.2,2.2" fill="none" stroke="#9be38a" stroke-width="2.1" stroke-linecap="round"/><path d="M4.6,7.6 L11.2,7.6" stroke="#9be38a" stroke-width="1.8"/></svg><div style="position:absolute;left:1426.4px;top:572.7px;font-size:13.60px;line-height:15.64px;font-weight:bold;font-style:normal;color:#f4f4f4;white-space:nowrap;transform:scaleX(0.9000);transform-origin:0 50%;text-shadow:0 1px 1px rgba(0,0,0,0.7);">GetActorLocation</div><div style="position:absolute;left:1426.4px;top:590.4px;font-size:12.40px;line-height:14.26px;font-weight:normal;font-style:italic;color:#a9b38d;white-space:nowrap;transform:scaleX(0.9000);transform-origin:0 50%;">Target is Actor</div><div style="position:absolute;left:1428.0px;top:617.2px;font-size:13.20px;line-height:15.18px;font-weight:normal;font-style:normal;color:#f2f2f2;white-space:nowrap;transform:scaleX(0.9000);transform-origin:0 50%;text-shadow:0 1px 1px rgba(0,0,0,0.6);">Target</div><div style="position:absolute;left:1468.0px;top:617.0px;width:30.0px;height:17.5px;border:1px solid #cfcfcf;box-sizing:border-box;border-radius:1px;"></div><div style="position:absolute;left:1474.9px;top:619.1px;font-size:11.50px;line-height:13.22px;font-weight:normal;font-style:normal;color:#d8d8d8;white-space:nowrap;transform:scaleX(0.9000);transform-origin:0 50%;">self</div><div style="position:absolute;left:1523.5px;top:617.2px;font-size:13.20px;line-height:15.18px;font-weight:normal;font-style:normal;color:#f2f2f2;white-space:nowrap;transform:scaleX(0.9000);transform-origin:0 50%;text-shadow:0 1px 1px rgba(0,0,0,0.6);">Return Value</div><div style="position:absolute;left:1411.1px;top:663.0px;width:214.7px;height:121.5px;background:#121212;border-radius:7px;box-shadow:2px 4px 6px rgba(0,0,0,0.45);"></div><div style="position:absolute;left:1412.6px;top:664.5px;width:211.7px;height:118.5px;background:#262826;border-radius:6px;overflow:hidden;"><div style="position:absolute;left:0.0px;top:0.0px;width:211.7px;height:23.2px;background:radial-gradient(ellipse 45% 55% at 22% 60%, rgba(0,0,0,0.28), rgba(0,0,0,0) 100%),linear-gradient(to right, rgba(110,160,110,0.8) 0%, rgba(85,125,88,0.7) 40%, rgba(50,65,52,0.55) 80%, rgba(40,46,42,0.5) 100%);box-shadow:inset 0 1.5px 0 rgba(255,255,255,0.3);"></div></div><svg style="position:absolute;left:1421.6px;top:668.1px" width="18" height="16"><path d="M2,2 L6,8 L2,14" fill="none" stroke="#fff" stroke-width="1.5"/><rect x="6" y="6" width="11" height="5" rx="2" fill="#3a70e0"/></svg><div style="position:absolute;left:1442.6px;top:668.3px;font-size:13.60px;line-height:15.64px;font-weight:bold;font-style:normal;color:#f4f4f4;white-space:nowrap;transform:scaleX(0.9000);transform-origin:0 50%;text-shadow:0 1px 1px rgba(0,0,0,0.7);">Make Vector</div><div style="position:absolute;left:1443.0px;top:695.4px;font-size:13.20px;line-height:15.18px;font-weight:normal;font-style:normal;color:#f2f2f2;white-space:nowrap;transform:scaleX(0.9000);transform-origin:0 50%;text-shadow:0 1px 1px rgba(0,0,0,0.6);">X</div><div style="position:absolute;left:1457.0px;top:696.5px;width:41.5px;height:17.0px;border:1px solid #cfcfcf;box-sizing:border-box;border-radius:1px;"></div><div style="position:absolute;left:1464.8px;top:698.4px;font-size:11.50px;line-height:13.22px;font-weight:normal;font-style:normal;color:#d8d8d8;white-space:nowrap;transform:scaleX(0.9000);transform-origin:0 50%;">850.0</div><div style="position:absolute;left:1443.0px;top:725.4px;font-size:13.20px;line-height:15.18px;font-weight:normal;font-style:normal;color:#f2f2f2;white-space:nowrap;transform:scaleX(0.9000);transform-origin:0 50%;text-shadow:0 1px 1px rgba(0,0,0,0.6);">Y</div><div style="position:absolute;left:1457.0px;top:726.5px;width:35.0px;height:17.0px;border:1px solid #cfcfcf;box-sizing:border-box;border-radius:1px;"></div><div style="position:absolute;left:1464.4px;top:728.4px;font-size:11.50px;line-height:13.22px;font-weight:normal;font-style:normal;color:#d8d8d8;white-space:nowrap;transform:scaleX(0.9000);transform-origin:0 50%;">10.0</div><div style="position:absolute;left:1443.0px;top:756.0px;font-size:13.20px;line-height:15.18px;font-weight:normal;font-style:normal;color:#f2f2f2;white-space:nowrap;transform:scaleX(0.9000);transform-origin:0 50%;text-shadow:0 1px 1px rgba(0,0,0,0.6);">Z</div><div style="position:absolute;left:1457.0px;top:757.1px;width:27.0px;height:17.0px;border:1px solid #cfcfcf;box-sizing:border-box;border-radius:1px;"></div><div style="position:absolute;left:1463.3px;top:759.0px;font-size:11.50px;line-height:13.22px;font-weight:normal;font-style:normal;color:#d8d8d8;white-space:nowrap;transform:scaleX(0.9000);transform-origin:0 50%;">0.0</div><div style="position:absolute;left:1524.5px;top:696.4px;font-size:13.20px;line-height:15.18px;font-weight:normal;font-style:normal;color:#f2f2f2;white-space:nowrap;transform:scaleX(0.9000);transform-origin:0 50%;text-shadow:0 1px 1px rgba(0,0,0,0.6);">Return Value</div><div style="position:absolute;left:1731.1px;top:647.2px;width:231.4px;height:135.0px;background:#121212;border-radius:7px;box-shadow:2px 4px 6px rgba(0,0,0,0.45);"></div><div style="position:absolute;left:1732.6px;top:648.8px;width:228.4px;height:132.0px;background:#262826;border-radius:6px;overflow:hidden;"><div style="position:absolute;left:0.0px;top:0.0px;width:228.4px;height:23.0px;background:radial-gradient(ellipse 45% 55% at 22% 60%, rgba(0,0,0,0.28), rgba(0,0,0,0) 100%),linear-gradient(to right, rgba(115,170,115,0.85) 0%, rgba(95,140,95,0.75) 45%, rgba(55,78,57,0.6) 80%, rgba(40,48,42,0.5) 100%);box-shadow:inset 0 1.5px 0 rgba(255,255,255,0.3);"></div></div><svg style="position:absolute;left:1745.6px;top:651.2px" width="16" height="19" viewBox="0 0 16 19"><path d="M1.2,16.2 C2.8,18.2 5.2,17.6 6.2,13.5 L8.6,4.6 C9.4,1.8 11.4,0.9 14.2,2.2" fill="none" stroke="#9be38a" stroke-width="2.1" stroke-linecap="round"/><path d="M4.6,7.6 L11.2,7.6" stroke="#9be38a" stroke-width="1.8"/></svg><div style="position:absolute;left:1762.6px;top:652.4px;font-size:13.60px;line-height:15.64px;font-weight:bold;font-style:normal;color:#f4f4f4;white-space:nowrap;transform:scaleX(0.9000);transform-origin:0 50%;text-shadow:0 1px 1px rgba(0,0,0,0.7);">VInterp to Constant</div><div style="position:absolute;left:1764.5px;top:679.8px;font-size:13.20px;line-height:15.18px;font-weight:normal;font-style:normal;color:#f2f2f2;white-space:nowrap;transform:scaleX(0.9000);transform-origin:0 50%;text-shadow:0 1px 1px rgba(0,0,0,0.6);">Current</div><div style="position:absolute;left:1764.5px;top:706.0px;font-size:13.20px;line-height:15.18px;font-weight:normal;font-style:normal;color:#f2f2f2;white-space:nowrap;transform:scaleX(0.9000);transform-origin:0 50%;text-shadow:0 1px 1px rgba(0,0,0,0.6);">Target</div><div style="position:absolute;left:1764.5px;top:731.8px;font-size:13.20px;line-height:15.18px;font-weight:normal;font-style:normal;color:#f2f2f2;white-space:nowrap;transform:scaleX(0.9000);transform-origin:0 50%;text-shadow:0 1px 1px rgba(0,0,0,0.6);">Delta Time</div><div style="position:absolute;left:1764.5px;top:758.0px;font-size:13.20px;line-height:15.18px;font-weight:normal;font-style:normal;color:#f2f2f2;white-space:nowrap;transform:scaleX(0.9000);transform-origin:0 50%;text-shadow:0 1px 1px rgba(0,0,0,0.6);">Interp Speed</div><div style="position:absolute;left:1861.5px;top:679.8px;font-size:13.20px;line-height:15.18px;font-weight:normal;font-style:normal;color:#f2f2f2;white-space:nowrap;transform:scaleX(0.9000);transform-origin:0 50%;text-shadow:0 1px 1px rgba(0,0,0,0.6);">Return Value</div><div style="position:absolute;left:1426.9px;top:822.8px;width:206.5px;height:58.4px;background:#121212;border-radius:7px;box-shadow:2px 4px 6px rgba(0,0,0,0.45);"></div><div style="position:absolute;left:1428.4px;top:824.3px;width:203.5px;height:55.4px;background:#262826;border-radius:6px;overflow:hidden;"><div style="position:absolute;left:0.0px;top:0.0px;width:203.5px;height:23.7px;background:radial-gradient(ellipse 45% 55% at 22% 60%, rgba(0,0,0,0.28), rgba(0,0,0,0) 100%),linear-gradient(to right, rgba(115,170,115,0.85) 0%, rgba(95,140,95,0.75) 45%, rgba(55,78,57,0.6) 80%, rgba(40,48,42,0.5) 100%);box-shadow:inset 0 1.5px 0 rgba(255,255,255,0.3);"></div></div><svg style="position:absolute;left:1441.4px;top:827.1px" width="16" height="19" viewBox="0 0 16 19"><path d="M1.2,16.2 C2.8,18.2 5.2,17.6 6.2,13.5 L8.6,4.6 C9.4,1.8 11.4,0.9 14.2,2.2" fill="none" stroke="#9be38a" stroke-width="2.1" stroke-linecap="round"/><path d="M4.6,7.6 L11.2,7.6" stroke="#9be38a" stroke-width="1.8"/></svg><div style="position:absolute;left:1458.4px;top:828.3px;font-size:13.60px;line-height:15.64px;font-weight:bold;font-style:normal;color:#f4f4f4;white-space:nowrap;transform:scaleX(0.9000);transform-origin:0 50%;text-shadow:0 1px 1px rgba(0,0,0,0.7);">Get World Delta Seconds</div><div style="position:absolute;left:1532.0px;top:855.9px;font-size:13.20px;line-height:15.18px;font-weight:normal;font-style:normal;color:#f2f2f2;white-space:nowrap;transform:scaleX(0.9000);transform-origin:0 50%;text-shadow:0 1px 1px rgba(0,0,0,0.6);">Return Value</div><div style="position:absolute;left:1362.5px;top:919.1px;width:134.6px;height:35.8px;background:#111;border-radius:18.4px;box-shadow:2px 4px 6px rgba(0,0,0,0.45);"></div><div style="position:absolute;left:1364.0px;top:920.6px;width:131.6px;height:32.8px;border-radius:16.4px;overflow:hidden;background:linear-gradient(#585858,#484848 60%,#454545);"><div style="position:absolute;left:0.0px;top:0.0px;width:131.6px;height:26.2px;background:linear-gradient(to bottom, rgba(165,225,110,0.85) 0%, rgba(110,160,80,0.55) 40%, rgba(80,110,65,0.45) 100%);-webkit-mask-image:linear-gradient(to right, rgba(0,0,0,0.25) 0%, #000 30%, #000 70%, rgba(0,0,0,0.25) 100%);"></div><div style="position:absolute;left:0.0px;top:0.0px;width:131.6px;height:32.8px;border-radius:16.4px;box-shadow:inset 0 1.5px 1px rgba(255,255,255,0.4);"></div></div><div style="position:absolute;left:1395.3px;top:928.8px;font-size:13.20px;line-height:15.18px;font-weight:normal;font-style:normal;color:#f2f2f2;white-space:nowrap;transform:scaleX(0.9000);transform-origin:0 50%;text-shadow:0 1px 1px rgba(0,0,0,0.6);">Move Speed</div><div style="position:absolute;left:1539.3px;top:919.1px;width:137.2px;height:60.4px;background:#111;border-radius:14px;box-shadow:2px 4px 6px rgba(0,0,0,0.45);"></div><div style="position:absolute;left:1540.8px;top:920.6px;width:134.2px;height:57.4px;border-radius:13px;overflow:hidden;background:linear-gradient(#545454,#4a4a4a 40%,#454545);"><div style="position:absolute;left:0.0px;top:0.0px;width:134.2px;height:57.4px;border-radius:13px;box-shadow:inset 0 1.5px 1px rgba(255,255,255,0.4);"></div></div><div style="position:absolute;left:1577.0px;top:952.0px;width:27.5px;height:17.5px;border:1px solid #cfcfcf;box-sizing:border-box;border-radius:1px;"></div><div style="position:absolute;left:1583.6px;top:954.1px;font-size:11.50px;line-height:13.22px;font-weight:normal;font-style:normal;color:#d8d8d8;white-space:nowrap;transform:scaleX(0.9000);transform-origin:0 50%;">2.0</div><div style="position:absolute;left:1602.1px;top:935.4px;font-size:22.00px;line-height:25.30px;font-weight:bold;font-style:normal;color:#b0b0b0;white-space:nowrap;">×</div><div style="position:absolute;left:1605.0px;top:958.4px;font-size:13.20px;line-height:15.18px;font-weight:normal;font-style:normal;color:#f2f2f2;white-space:nowrap;transform:scaleX(0.9000);transform-origin:0 50%;text-shadow:0 1px 1px rgba(0,0,0,0.6);">Add pin</div><div style="position:absolute;left:1654.6px;top:957.4px;font-size:15.00px;line-height:17.25px;font-weight:bold;font-style:normal;color:#fff;white-space:nowrap;">+</div><div style="position:absolute;left:2259.0px;top:663.0px;width:258.9px;height:196.0px;background:#121212;border-radius:7px;box-shadow:2px 4px 6px rgba(0,0,0,0.45);"></div><div style="position:absolute;left:2260.5px;top:664.5px;width:255.9px;height:193.0px;background:#262826;border-radius:6px;overflow:hidden;"><div style="position:absolute;left:0.0px;top:0.0px;width:255.9px;height:39.5px;background:radial-gradient(ellipse 45% 55% at 22% 60%, rgba(0,0,0,0.28), rgba(0,0,0,0) 100%),linear-gradient(to right, rgba(92,150,195,0.88) 0%, rgba(70,115,150,0.75) 40%, rgba(50,70,85,0.6) 80%, rgba(42,48,54,0.5) 100%);box-shadow:inset 0 1.5px 0 rgba(255,255,255,0.3);"></div></div><svg style="position:absolute;left:2273.5px;top:667.5px" width="16" height="19" viewBox="0 0 16 19"><path d="M1.2,16.2 C2.8,18.2 5.2,17.6 6.2,13.5 L8.6,4.6 C9.4,1.8 11.4,0.9 14.2,2.2" fill="none" stroke="#7cc8ff" stroke-width="2.1" stroke-linecap="round"/><path d="M4.6,7.6 L11.2,7.6" stroke="#7cc8ff" stroke-width="1.8"/></svg><div style="position:absolute;left:2290.5px;top:668.7px;font-size:13.60px;line-height:15.64px;font-weight:bold;font-style:normal;color:#f4f4f4;white-space:nowrap;transform:scaleX(0.9000);transform-origin:0 50%;text-shadow:0 1px 1px rgba(0,0,0,0.7);">SetActorLocation</div><div style="position:absolute;left:2290.5px;top:686.4px;font-size:12.40px;line-height:14.26px;font-weight:normal;font-style:italic;color:#a9b38d;white-space:nowrap;transform:scaleX(0.9000);transform-origin:0 50%;">Target is Actor</div><div style="position:absolute;left:2292.0px;top:740.0px;font-size:13.20px;line-height:15.18px;font-weight:normal;font-style:normal;color:#f2f2f2;white-space:nowrap;transform:scaleX(0.9000);transform-origin:0 50%;text-shadow:0 1px 1px rgba(0,0,0,0.6);">Target</div><div style="position:absolute;left:2332.0px;top:741.0px;width:30.0px;height:17.5px;border:1px solid #cfcfcf;box-sizing:border-box;border-radius:1px;"></div><div style="position:absolute;left:2338.9px;top:743.1px;font-size:11.50px;line-height:13.22px;font-weight:normal;font-style:normal;color:#d8d8d8;white-space:nowrap;transform:scaleX(0.9000);transform-origin:0 50%;">self</div><div style="position:absolute;left:2292.0px;top:769.9px;font-size:13.20px;line-height:15.18px;font-weight:normal;font-style:normal;color:#f2f2f2;white-space:nowrap;transform:scaleX(0.9000);transform-origin:0 50%;text-shadow:0 1px 1px rgba(0,0,0,0.6);">New Location</div><div style="position:absolute;left:2292.0px;top:796.4px;font-size:13.20px;line-height:15.18px;font-weight:normal;font-style:normal;color:#f2f2f2;white-space:nowrap;transform:scaleX(0.9000);transform-origin:0 50%;text-shadow:0 1px 1px rgba(0,0,0,0.6);">Sweep</div><div style="position:absolute;left:2334.5px;top:798.9px;width:15.0px;height:15.0px;border:2px solid #e4e4e4;box-sizing:border-box;border-radius:3px;background:#3a3a3a;"></div><div style="position:absolute;left:2292.0px;top:827.9px;font-size:13.20px;line-height:15.18px;font-weight:normal;font-style:normal;color:#f2f2f2;white-space:nowrap;transform:scaleX(0.9000);transform-origin:0 50%;text-shadow:0 1px 1px rgba(0,0,0,0.6);">Teleport</div><div style="position:absolute;left:2343.5px;top:830.5px;width:15.0px;height:15.0px;border:2px solid #e4e4e4;box-sizing:border-box;border-radius:3px;background:#3a3a3a;"></div><div style="position:absolute;left:2393.9px;top:740.0px;font-size:13.20px;line-height:15.18px;font-weight:normal;font-style:normal;color:#f2f2f2;white-space:nowrap;transform:scaleX(0.9000);transform-origin:0 50%;text-shadow:0 1px 1px rgba(0,0,0,0.6);">Sweep Hit Result</div><div style="position:absolute;left:2416.5px;top:766.2px;font-size:13.20px;line-height:15.18px;font-weight:normal;font-style:normal;color:#f2f2f2;white-space:nowrap;transform:scaleX(0.9000);transform-origin:0 50%;text-shadow:0 1px 1px rgba(0,0,0,0.6);">Return Value</div><div style="position:absolute;left:691.0px;top:1191.0px;width:122.9px;height:85.2px;background:#121212;border-radius:7px;box-shadow:2px 4px 6px rgba(0,0,0,0.45);"></div><div style="position:absolute;left:692.5px;top:1192.5px;width:119.9px;height:82.2px;background:#262826;border-radius:6px;overflow:hidden;"><div style="position:absolute;left:0.0px;top:0.0px;width:119.9px;height:23.5px;background:radial-gradient(ellipse 45% 55% at 22% 60%, rgba(0,0,0,0.28), rgba(0,0,0,0) 100%),linear-gradient(to right, rgba(190,30,30,0.9) 0%, rgba(150,30,30,0.8) 40%, rgba(70,35,35,0.6) 80%, rgba(50,40,40,0.5) 100%);box-shadow:inset 0 1.5px 0 rgba(255,255,255,0.3);"></div></div><svg style="position:absolute;left:702.5px;top:1196.2px" width="16" height="16"><path d="M8,1.5 L14.5,8 L8,14.5 L1.5,8 Z" fill="none" stroke="#fff" stroke-width="2"/></svg><div style="position:absolute;left:722.5px;top:1196.4px;font-size:13.60px;line-height:15.64px;font-weight:bold;font-style:normal;color:#f4f4f4;white-space:nowrap;transform:scaleX(0.9000);transform-origin:0 50%;text-shadow:0 1px 1px rgba(0,0,0,0.7);">Event Tick</div><div style="position:absolute;left:795.5px;top:1198.0px;width:11.0px;height:11.0px;background:#200;border:2px solid #ff3030;box-sizing:border-box;"></div><div style="position:absolute;left:704.7px;top:1252.0px;font-size:13.20px;line-height:15.18px;font-weight:normal;font-style:normal;color:#f2f2f2;white-space:nowrap;transform:scaleX(0.9000);transform-origin:0 50%;text-shadow:0 1px 1px rgba(0,0,0,0.6);">Delta Seconds</div><div style="position:absolute;left:930.8px;top:1191.0px;width:237.0px;height:113.5px;background:#121212;border-radius:7px;box-shadow:2px 4px 6px rgba(0,0,0,0.45);"></div><div style="position:absolute;left:932.3px;top:1192.5px;width:234.0px;height:110.5px;background:#262826;border-radius:6px;overflow:hidden;"><div style="position:absolute;left:0.0px;top:0.0px;width:234.0px;height:23.5px;background:radial-gradient(ellipse 45% 55% at 22% 60%, rgba(0,0,0,0.28), rgba(0,0,0,0) 100%),linear-gradient(to right, rgba(30,150,160,0.9) 0%, rgba(30,120,130,0.8) 40%, rgba(40,70,75,0.6) 80%, rgba(40,50,52,0.5) 100%);box-shadow:inset 0 1.5px 0 rgba(255,255,255,0.3);"></div></div><svg style="position:absolute;left:943.3px;top:1198.2px" width="16" height="12"><path d="M1,2 L1,10 M1,6 L14,6 M9,2 L14,6 L9,10" fill="none" stroke="#fff" stroke-width="2"/></svg><div style="position:absolute;left:962.3px;top:1196.4px;font-size:13.60px;line-height:15.64px;font-weight:bold;font-style:normal;color:#f4f4f4;white-space:nowrap;transform:scaleX(0.9000);transform-origin:0 50%;text-shadow:0 1px 1px rgba(0,0,0,0.7);">Cast To PongGameMode</div><div style="position:absolute;left:964.0px;top:1252.0px;font-size:13.20px;line-height:15.18px;font-weight:normal;font-style:normal;color:#f2f2f2;white-space:nowrap;transform:scaleX(0.9000);transform-origin:0 50%;text-shadow:0 1px 1px rgba(0,0,0,0.6);">Object</div><div style="position:absolute;left:1076.9px;top:1253.0px;font-size:13.20px;line-height:15.18px;font-weight:normal;font-style:normal;color:#f2f2f2;white-space:nowrap;transform:scaleX(0.9000);transform-origin:0 50%;text-shadow:0 1px 1px rgba(0,0,0,0.6);">Cast Failed</div><div style="position:absolute;left:1021.4px;top:1280.2px;font-size:13.20px;line-height:15.18px;font-weight:normal;font-style:normal;color:#f2f2f2;white-space:nowrap;transform:scaleX(0.9000);transform-origin:0 50%;text-shadow:0 1px 1px rgba(0,0,0,0.6);">As Pong Game Mode</div><div style="position:absolute;left:723.2px;top:1335.3px;width:154.8px;height:57.4px;background:#121212;border-radius:7px;box-shadow:2px 4px 6px rgba(0,0,0,0.45);"></div><div style="position:absolute;left:724.7px;top:1336.8px;width:151.8px;height:54.4px;background:#262826;border-radius:6px;overflow:hidden;"><div style="position:absolute;left:0.0px;top:0.0px;width:151.8px;height:23.0px;background:radial-gradient(ellipse 45% 55% at 22% 60%, rgba(0,0,0,0.28), rgba(0,0,0,0) 100%),linear-gradient(to right, rgba(115,170,115,0.85) 0%, rgba(95,140,95,0.75) 45%, rgba(55,78,57,0.6) 80%, rgba(40,48,42,0.5) 100%);box-shadow:inset 0 1.5px 0 rgba(255,255,255,0.3);"></div></div><svg style="position:absolute;left:737.7px;top:1339.3px" width="16" height="19" viewBox="0 0 16 19"><path d="M1.2,16.2 C2.8,18.2 5.2,17.6 6.2,13.5 L8.6,4.6 C9.4,1.8 11.4,0.9 14.2,2.2" fill="none" stroke="#9be38a" stroke-width="2.1" stroke-linecap="round"/><path d="M4.6,7.6 L11.2,7.6" stroke="#9be38a" stroke-width="1.8"/></svg><div style="position:absolute;left:754.7px;top:1340.5px;font-size:13.60px;line-height:15.64px;font-weight:bold;font-style:normal;color:#f4f4f4;white-space:nowrap;transform:scaleX(0.9000);transform-origin:0 50%;text-shadow:0 1px 1px rgba(0,0,0,0.7);">Get Game Mode</div><div style="position:absolute;left:777.5px;top:1367.9px;font-size:13.20px;line-height:15.18px;font-weight:normal;font-style:normal;color:#f2f2f2;white-space:nowrap;transform:scaleX(0.9000);transform-origin:0 50%;text-shadow:0 1px 1px rgba(0,0,0,0.6);">Return Value</div><div style="position:absolute;left:1235.0px;top:1271.2px;width:180.0px;height:35.7px;background:#111;border-radius:18.4px;box-shadow:2px 4px 6px rgba(0,0,0,0.45);"></div><div style="position:absolute;left:1236.5px;top:1272.7px;width:177.0px;height:32.7px;border-radius:16.4px;overflow:hidden;background:linear-gradient(#585858,#484848 60%,#454545);"><div style="position:absolute;left:0.0px;top:0.0px;width:177.0px;height:26.2px;background:linear-gradient(to bottom, rgba(110,190,235,0.9) 0%, rgba(60,130,170,0.6) 40%, rgba(45,85,105,0.55) 100%);-webkit-mask-image:linear-gradient(to right, rgba(0,0,0,0.25) 0%, #000 30%, #000 70%, rgba(0,0,0,0.25) 100%);"></div><div style="position:absolute;left:0.0px;top:0.0px;width:177.0px;height:32.7px;border-radius:16.4px;box-shadow:inset 0 1.5px 1px rgba(255,255,255,0.4);"></div></div><div style="position:absolute;left:1270.0px;top:1281.2px;font-size:13.20px;line-height:15.18px;font-weight:normal;font-style:normal;color:#f2f2f2;white-space:nowrap;transform:scaleX(0.9000);transform-origin:0 50%;text-shadow:0 1px 1px rgba(0,0,0,0.6);">Target</div><div style="position:absolute;left:1338.4px;top:1281.2px;font-size:13.20px;line-height:15.18px;font-weight:normal;font-style:normal;color:#f2f2f2;white-space:nowrap;transform:scaleX(0.9000);transform-origin:0 50%;text-shadow:0 1px 1px rgba(0,0,0,0.6);">Ball Ref</div><div style="position:absolute;left:1491.0px;top:1207.1px;width:139.5px;height:70.7px;background:#111;border-radius:14px;box-shadow:2px 4px 6px rgba(0,0,0,0.45);"></div><div style="position:absolute;left:1492.5px;top:1208.6px;width:136.5px;height:67.7px;border-radius:13px;overflow:hidden;background:linear-gradient(#545454,#4a4a4a 40%,#454545);"><div style="position:absolute;left:0.0px;top:0.0px;width:136.5px;height:26.4px;background:linear-gradient(to bottom, rgba(110,190,235,0.9) 0%, rgba(60,130,170,0.6) 40%, rgba(45,85,105,0.55) 100%);-webkit-mask-image:linear-gradient(to right, rgba(0,0,0,0.25) 0%, #000 30%, #000 70%, rgba(0,0,0,0.25) 100%);"></div><div style="position:absolute;left:0.0px;top:0.0px;width:136.5px;height:67.7px;border-radius:13px;box-shadow:inset 0 1.5px 1px rgba(255,255,255,0.4);"></div></div><div style="position:absolute;left:1550.0px;top:1215.8px;font-size:12.50px;line-height:14.37px;font-weight:bold;font-style:normal;color:#f0f0f0;white-space:nowrap;transform:scaleX(0.9049);transform-origin:0 50%;">SET</div><div style="position:absolute;left:1526.0px;top:1252.0px;font-size:13.20px;line-height:15.18px;font-weight:normal;font-style:normal;color:#f2f2f2;white-space:nowrap;transform:scaleX(0.9000);transform-origin:0 50%;text-shadow:0 1px 1px rgba(0,0,0,0.6);">Ball Ref</div><div style="position:absolute;left:1715.4px;top:1191.2px;width:218.2px;height:87.6px;background:#121212;border-radius:7px;box-shadow:2px 4px 6px rgba(0,0,0,0.45);"></div><div style="position:absolute;left:1716.9px;top:1192.7px;width:215.2px;height:84.6px;background:#262826;border-radius:6px;overflow:hidden;"><div style="position:absolute;left:0.0px;top:0.0px;width:215.2px;height:23.1px;background:radial-gradient(ellipse 45% 55% at 22% 60%, rgba(0,0,0,0.28), rgba(0,0,0,0) 100%),linear-gradient(to right, rgba(200,200,200,0.85) 0%, rgba(165,165,165,0.75) 22%, rgba(70,70,70,0.55) 47%, rgba(55,55,55,0.5) 100%);box-shadow:inset 0 1.5px 0 rgba(255,255,255,0.3);"></div></div><div style="position:absolute;left:1728.9px;top:1196.2px;font-size:14.00px;line-height:16.10px;font-weight:bold;font-style:normal;color:#fff;white-space:nowrap;">?</div><div style="position:absolute;left:1745.9px;top:1196.4px;font-size:13.60px;line-height:15.64px;font-weight:bold;font-style:normal;color:#f4f4f4;white-space:nowrap;transform:scaleX(0.9000);transform-origin:0 50%;text-shadow:0 1px 1px rgba(0,0,0,0.7);">Is Valid</div><div style="position:absolute;left:1746.0px;top:1225.2px;font-size:13.20px;line-height:15.18px;font-weight:normal;font-style:normal;color:#f2f2f2;white-space:nowrap;transform:scaleX(0.9000);transform-origin:0 50%;text-shadow:0 1px 1px rgba(0,0,0,0.6);">Exec</div><div style="position:absolute;left:1748.0px;top:1252.3px;font-size:13.20px;line-height:15.18px;font-weight:normal;font-style:normal;color:#f2f2f2;white-space:nowrap;transform:scaleX(0.9000);transform-origin:0 50%;text-shadow:0 1px 1px rgba(0,0,0,0.6);">Input Object</div><div style="position:absolute;left:1864.9px;top:1225.2px;font-size:13.20px;line-height:15.18px;font-weight:normal;font-style:normal;color:#f2f2f2;white-space:nowrap;transform:scaleX(0.9000);transform-origin:0 50%;text-shadow:0 1px 1px rgba(0,0,0,0.6);">Is Valid</div><div style="position:absolute;left:1843.1px;top:1253.0px;font-size:13.20px;line-height:15.18px;font-weight:normal;font-style:normal;color:#f2f2f2;white-space:nowrap;transform:scaleX(0.9000);transform-origin:0 50%;text-shadow:0 1px 1px rgba(0,0,0,0.6);">Is Not Valid</div><div style="position:absolute;left:2083.5px;top:1191.2px;width:173.2px;height:87.6px;background:#121212;border-radius:7px;box-shadow:2px 4px 6px rgba(0,0,0,0.45);"></div><div style="position:absolute;left:2085.0px;top:1192.7px;width:170.2px;height:84.6px;background:#262826;border-radius:6px;overflow:hidden;"><div style="position:absolute;left:0.0px;top:0.0px;width:170.2px;height:23.1px;background:radial-gradient(ellipse 45% 55% at 22% 60%, rgba(0,0,0,0.28), rgba(0,0,0,0) 100%),linear-gradient(to right, rgba(200,200,200,0.85) 0%, rgba(165,165,165,0.75) 22%, rgba(70,70,70,0.55) 47%, rgba(55,55,55,0.5) 100%);box-shadow:inset 0 1.5px 0 rgba(255,255,255,0.3);"></div></div><svg style="position:absolute;left:2092.0px;top:1196.2px" width="16" height="16"><path d="M14,3 L8,3 C4,3 3,6 3,8 C3,10 4,13 8,13 L14,13 M1,8 L5,8" fill="none" stroke="#fff" stroke-width="2"/></svg><div style="position:absolute;left:2112.0px;top:1196.4px;font-size:13.60px;line-height:15.64px;font-weight:bold;font-style:normal;color:#f4f4f4;white-space:nowrap;transform:scaleX(0.9000);transform-origin:0 50%;text-shadow:0 1px 1px rgba(0,0,0,0.7);">Branch</div><div style="position:absolute;left:2202.0px;top:1225.2px;font-size:13.20px;line-height:15.18px;font-weight:normal;font-style:normal;color:#f2f2f2;white-space:nowrap;transform:scaleX(0.9000);transform-origin:0 50%;text-shadow:0 1px 1px rgba(0,0,0,0.6);">True</div><div style="position:absolute;left:2116.0px;top:1252.3px;font-size:13.20px;line-height:15.18px;font-weight:normal;font-style:normal;color:#f2f2f2;white-space:nowrap;transform:scaleX(0.9000);transform-origin:0 50%;text-shadow:0 1px 1px rgba(0,0,0,0.6);">Condition</div><div style="position:absolute;left:2196.9px;top:1253.0px;font-size:13.20px;line-height:15.18px;font-weight:normal;font-style:normal;color:#f2f2f2;white-space:nowrap;transform:scaleX(0.9000);transform-origin:0 50%;text-shadow:0 1px 1px rgba(0,0,0,0.6);">False</div><div style="position:absolute;left:2355.1px;top:1174.7px;width:258.6px;height:195.8px;background:#121212;border-radius:7px;box-shadow:2px 4px 6px rgba(0,0,0,0.45);"></div><div style="position:absolute;left:2356.6px;top:1176.2px;width:255.6px;height:192.8px;background:#262826;border-radius:6px;overflow:hidden;"><div style="position:absolute;left:0.0px;top:0.0px;width:255.6px;height:39.6px;background:radial-gradient(ellipse 45% 55% at 22% 60%, rgba(0,0,0,0.28), rgba(0,0,0,0) 100%),linear-gradient(to right, rgba(92,150,195,0.88) 0%, rgba(70,115,150,0.75) 40%, rgba(50,70,85,0.6) 80%, rgba(42,48,54,0.5) 100%);box-shadow:inset 0 1.5px 0 rgba(255,255,255,0.3);"></div></div><svg style="position:absolute;left:2369.6px;top:1179.2px" width="16" height="19" viewBox="0 0 16 19"><path d="M1.2,16.2 C2.8,18.2 5.2,17.6 6.2,13.5 L8.6,4.6 C9.4,1.8 11.4,0.9 14.2,2.2" fill="none" stroke="#7cc8ff" stroke-width="2.1" stroke-linecap="round"/><path d="M4.6,7.6 L11.2,7.6" stroke="#7cc8ff" stroke-width="1.8"/></svg><div style="position:absolute;left:2386.6px;top:1180.4px;font-size:13.60px;line-height:15.64px;font-weight:bold;font-style:normal;color:#f4f4f4;white-space:nowrap;transform:scaleX(0.9000);transform-origin:0 50%;text-shadow:0 1px 1px rgba(0,0,0,0.7);">SetActorLocation</div><div style="position:absolute;left:2386.6px;top:1198.1px;font-size:12.40px;line-height:14.26px;font-weight:normal;font-style:italic;color:#a9b38d;white-space:nowrap;transform:scaleX(0.9000);transform-origin:0 50%;">Target is Actor</div><div style="position:absolute;left:2388.0px;top:1252.4px;font-size:13.20px;line-height:15.18px;font-weight:normal;font-style:normal;color:#f2f2f2;white-space:nowrap;transform:scaleX(0.9000);transform-origin:0 50%;text-shadow:0 1px 1px rgba(0,0,0,0.6);">Target</div><div style="position:absolute;left:2428.0px;top:1253.5px;width:30.0px;height:17.5px;border:1px solid #cfcfcf;box-sizing:border-box;border-radius:1px;"></div><div style="position:absolute;left:2434.9px;top:1255.6px;font-size:11.50px;line-height:13.22px;font-weight:normal;font-style:normal;color:#d8d8d8;white-space:nowrap;transform:scaleX(0.9000);transform-origin:0 50%;">self</div><div style="position:absolute;left:2388.0px;top:1281.8px;font-size:13.20px;line-height:15.18px;font-weight:normal;font-style:normal;color:#f2f2f2;white-space:nowrap;transform:scaleX(0.9000);transform-origin:0 50%;text-shadow:0 1px 1px rgba(0,0,0,0.6);">New Location</div><div style="position:absolute;left:2388.0px;top:1308.4px;font-size:13.20px;line-height:15.18px;font-weight:normal;font-style:normal;color:#f2f2f2;white-space:nowrap;transform:scaleX(0.9000);transform-origin:0 50%;text-shadow:0 1px 1px rgba(0,0,0,0.6);">Sweep</div><div style="position:absolute;left:2430.5px;top:1310.7px;width:15.0px;height:15.0px;border:2px solid #e4e4e4;box-sizing:border-box;border-radius:3px;background:#3a3a3a;"></div><div style="position:absolute;left:2388.0px;top:1339.9px;font-size:13.20px;line-height:15.18px;font-weight:normal;font-style:normal;color:#f2f2f2;white-space:nowrap;transform:scaleX(0.9000);transform-origin:0 50%;text-shadow:0 1px 1px rgba(0,0,0,0.6);">Teleport</div><div style="position:absolute;left:2439.5px;top:1342.5px;width:15.0px;height:15.0px;border:2px solid #e4e4e4;box-sizing:border-box;border-radius:3px;background:#3a3a3a;"></div><div style="position:absolute;left:2489.9px;top:1252.4px;font-size:13.20px;line-height:15.18px;font-weight:normal;font-style:normal;color:#f2f2f2;white-space:nowrap;transform:scaleX(0.9000);transform-origin:0 50%;text-shadow:0 1px 1px rgba(0,0,0,0.6);">Sweep Hit Result</div><div style="position:absolute;left:2512.5px;top:1277.8px;font-size:13.20px;line-height:15.18px;font-weight:normal;font-style:normal;color:#f2f2f2;white-space:nowrap;transform:scaleX(0.9000);transform-origin:0 50%;text-shadow:0 1px 1px rgba(0,0,0,0.6);">Return Value</div><div style="position:absolute;left:1587.0px;top:1319.5px;width:211.2px;height:125.0px;background:#121212;border-radius:7px;box-shadow:2px 4px 6px rgba(0,0,0,0.45);"></div><div style="position:absolute;left:1588.5px;top:1321.0px;width:208.2px;height:122.0px;background:#262826;border-radius:6px;overflow:hidden;"><div style="position:absolute;left:0.0px;top:0.0px;width:208.2px;height:38.7px;background:radial-gradient(ellipse 45% 55% at 22% 60%, rgba(0,0,0,0.28), rgba(0,0,0,0) 100%),linear-gradient(to right, rgba(115,170,115,0.85) 0%, rgba(95,140,95,0.75) 45%, rgba(55,78,57,0.6) 80%, rgba(40,48,42,0.5) 100%);box-shadow:inset 0 1.5px 0 rgba(255,255,255,0.3);"></div></div><svg style="position:absolute;left:1601.5px;top:1324.0px" width="16" height="19" viewBox="0 0 16 19"><path d="M1.2,16.2 C2.8,18.2 5.2,17.6 6.2,13.5 L8.6,4.6 C9.4,1.8 11.4,0.9 14.2,2.2" fill="none" stroke="#9be38a" stroke-width="2.1" stroke-linecap="round"/><path d="M4.6,7.6 L11.2,7.6" stroke="#9be38a" stroke-width="1.8"/></svg><div style="position:absolute;left:1618.5px;top:1325.2px;font-size:13.60px;line-height:15.64px;font-weight:bold;font-style:normal;color:#f4f4f4;white-space:nowrap;transform:scaleX(0.9000);transform-origin:0 50%;text-shadow:0 1px 1px rgba(0,0,0,0.7);">Get Velocity</div><div style="position:absolute;left:1618.5px;top:1342.9px;font-size:12.40px;line-height:14.26px;font-weight:normal;font-style:italic;color:#a9b38d;white-space:nowrap;transform:scaleX(0.9000);transform-origin:0 50%;">Target is Actor</div><div style="position:absolute;left:1620.0px;top:1367.9px;font-size:13.20px;line-height:15.18px;font-weight:normal;font-style:normal;color:#f2f2f2;white-space:nowrap;transform:scaleX(0.9000);transform-origin:0 50%;text-shadow:0 1px 1px rgba(0,0,0,0.6);">Target</div><div style="position:absolute;left:1685.3px;top:1367.7px;font-size:13.20px;line-height:15.18px;font-weight:normal;font-style:normal;color:#f2f2f2;white-space:nowrap;transform:scaleX(0.9000);transform-origin:0 50%;text-shadow:0 1px 1px rgba(0,0,0,0.6);">Return Value X</div><div style="position:absolute;left:1685.5px;top:1393.9px;font-size:13.20px;line-height:15.18px;font-weight:normal;font-style:normal;color:#f2f2f2;white-space:nowrap;transform:scaleX(0.9000);transform-origin:0 50%;text-shadow:0 1px 1px rgba(0,0,0,0.6);">Return Value Y</div><div style="position:absolute;left:1686.0px;top:1419.9px;font-size:13.20px;line-height:15.18px;font-weight:normal;font-style:normal;color:#f2f2f2;white-space:nowrap;transform:scaleX(0.9000);transform-origin:0 50%;text-shadow:0 1px 1px rgba(0,0,0,0.6);">Return Value Z</div><div style="position:absolute;left:1923.3px;top:1335.1px;width:133.6px;height:60.3px;background:#111;border-radius:14px;box-shadow:2px 4px 6px rgba(0,0,0,0.45);"></div><div style="position:absolute;left:1924.8px;top:1336.6px;width:130.6px;height:57.3px;border-radius:13px;overflow:hidden;background:linear-gradient(#545454,#4a4a4a 40%,#454545);"><div style="position:absolute;left:0.0px;top:0.0px;width:130.6px;height:57.3px;border-radius:13px;box-shadow:inset 0 1.5px 1px rgba(255,255,255,0.4);"></div></div><div style="position:absolute;left:1961.0px;top:1368.0px;width:27.6px;height:17.5px;border:1px solid #cfcfcf;box-sizing:border-box;border-radius:1px;"></div><div style="position:absolute;left:1967.6px;top:1370.1px;font-size:11.50px;line-height:13.22px;font-weight:normal;font-style:normal;color:#d8d8d8;white-space:nowrap;transform:scaleX(0.9000);transform-origin:0 50%;">0.0</div><div style="position:absolute;left:1985.2px;top:1354.5px;font-size:20.00px;line-height:23.00px;font-weight:bold;font-style:normal;color:#b8b8b8;white-space:nowrap;">&gt;</div><div style="position:absolute;left:1731.1px;top:1591.1px;width:229.8px;height:77.5px;background:#121212;border-radius:7px;box-shadow:2px 4px 6px rgba(0,0,0,0.45);"></div><div style="position:absolute;left:1732.6px;top:1592.6px;width:226.8px;height:74.5px;background:#262826;border-radius:6px;overflow:hidden;"><div style="position:absolute;left:0.0px;top:0.0px;width:226.8px;height:39.4px;background:radial-gradient(ellipse 45% 55% at 22% 60%, rgba(0,0,0,0.28), rgba(0,0,0,0) 100%),linear-gradient(to right, rgba(115,170,115,0.85) 0%, rgba(95,140,95,0.75) 45%, rgba(55,78,57,0.6) 80%, rgba(40,48,42,0.5) 100%);box-shadow:inset 0 1.5px 0 rgba(255,255,255,0.3);"></div></div><svg style="position:absolute;left:1745.6px;top:1595.6px" width="16" height="19" viewBox="0 0 16 19"><path d="M1.2,16.2 C2.8,18.2 5.2,17.6 6.2,13.5 L8.6,4.6 C9.4,1.8 11.4,0.9 14.2,2.2" fill="none" stroke="#9be38a" stroke-width="2.1" stroke-linecap="round"/><path d="M4.6,7.6 L11.2,7.6" stroke="#9be38a" stroke-width="1.8"/></svg><div style="position:absolute;left:1762.6px;top:1596.8px;font-size:13.60px;line-height:15.64px;font-weight:bold;font-style:normal;color:#f4f4f4;white-space:nowrap;transform:scaleX(0.9000);transform-origin:0 50%;text-shadow:0 1px 1px rgba(0,0,0,0.7);">GetActorLocation</div><div style="position:absolute;left:1762.6px;top:1614.5px;font-size:12.40px;line-height:14.26px;font-weight:normal;font-style:italic;color:#a9b38d;white-space:nowrap;transform:scaleX(0.9000);transform-origin:0 50%;">Target is Actor</div><div style="position:absolute;left:1764.0px;top:1641.4px;font-size:13.20px;line-height:15.18px;font-weight:normal;font-style:normal;color:#f2f2f2;white-space:nowrap;transform:scaleX(0.9000);transform-origin:0 50%;text-shadow:0 1px 1px rgba(0,0,0,0.6);">Target</div><div style="position:absolute;left:1804.0px;top:1641.5px;width:30.0px;height:17.5px;border:1px solid #cfcfcf;box-sizing:border-box;border-radius:1px;"></div><div style="position:absolute;left:1810.9px;top:1643.6px;font-size:11.50px;line-height:13.22px;font-weight:normal;font-style:normal;color:#d8d8d8;white-space:nowrap;transform:scaleX(0.9000);transform-origin:0 50%;">self</div><div style="position:absolute;left:1860.5px;top:1641.4px;font-size:13.20px;line-height:15.18px;font-weight:normal;font-style:normal;color:#f2f2f2;white-space:nowrap;transform:scaleX(0.9000);transform-origin:0 50%;text-shadow:0 1px 1px rgba(0,0,0,0.6);">Return Value</div><div style="position:absolute;left:2019.1px;top:1575.5px;width:232.0px;height:135.2px;background:#121212;border-radius:7px;box-shadow:2px 4px 6px rgba(0,0,0,0.45);"></div><div style="position:absolute;left:2020.6px;top:1577.0px;width:229.0px;height:132.2px;background:#262826;border-radius:6px;overflow:hidden;"><div style="position:absolute;left:0.0px;top:0.0px;width:229.0px;height:23.0px;background:radial-gradient(ellipse 45% 55% at 22% 60%, rgba(0,0,0,0.28), rgba(0,0,0,0) 100%),linear-gradient(to right, rgba(115,170,115,0.85) 0%, rgba(95,140,95,0.75) 45%, rgba(55,78,57,0.6) 80%, rgba(40,48,42,0.5) 100%);box-shadow:inset 0 1.5px 0 rgba(255,255,255,0.3);"></div></div><svg style="position:absolute;left:2033.6px;top:1579.5px" width="16" height="19" viewBox="0 0 16 19"><path d="M1.2,16.2 C2.8,18.2 5.2,17.6 6.2,13.5 L8.6,4.6 C9.4,1.8 11.4,0.9 14.2,2.2" fill="none" stroke="#9be38a" stroke-width="2.1" stroke-linecap="round"/><path d="M4.6,7.6 L11.2,7.6" stroke="#9be38a" stroke-width="1.8"/></svg><div style="position:absolute;left:2050.6px;top:1580.7px;font-size:13.60px;line-height:15.64px;font-weight:bold;font-style:normal;color:#f4f4f4;white-space:nowrap;transform:scaleX(0.9000);transform-origin:0 50%;text-shadow:0 1px 1px rgba(0,0,0,0.7);">VInterp to Constant</div><div style="position:absolute;left:2052.5px;top:1608.0px;font-size:13.20px;line-height:15.18px;font-weight:normal;font-style:normal;color:#f2f2f2;white-space:nowrap;transform:scaleX(0.9000);transform-origin:0 50%;text-shadow:0 1px 1px rgba(0,0,0,0.6);">Current</div><div style="position:absolute;left:2052.5px;top:1634.1px;font-size:13.20px;line-height:15.18px;font-weight:normal;font-style:normal;color:#f2f2f2;white-space:nowrap;transform:scaleX(0.9000);transform-origin:0 50%;text-shadow:0 1px 1px rgba(0,0,0,0.6);">Target</div><div style="position:absolute;left:2052.5px;top:1660.0px;font-size:13.20px;line-height:15.18px;font-weight:normal;font-style:normal;color:#f2f2f2;white-space:nowrap;transform:scaleX(0.9000);transform-origin:0 50%;text-shadow:0 1px 1px rgba(0,0,0,0.6);">Delta Time</div><div style="position:absolute;left:2052.5px;top:1685.9px;font-size:13.20px;line-height:15.18px;font-weight:normal;font-style:normal;color:#f2f2f2;white-space:nowrap;transform:scaleX(0.9000);transform-origin:0 50%;text-shadow:0 1px 1px rgba(0,0,0,0.6);">Interp Speed</div><div style="position:absolute;left:2150.0px;top:1608.0px;font-size:13.20px;line-height:15.18px;font-weight:normal;font-style:normal;color:#f2f2f2;white-space:nowrap;transform:scaleX(0.9000);transform-origin:0 50%;text-shadow:0 1px 1px rgba(0,0,0,0.6);">Return Value</div><div style="position:absolute;left:1747.5px;top:1687.4px;width:214.1px;height:117.1px;background:#121212;border-radius:7px;box-shadow:2px 4px 6px rgba(0,0,0,0.45);"></div><div style="position:absolute;left:1749.0px;top:1688.9px;width:211.1px;height:114.1px;background:#262826;border-radius:6px;overflow:hidden;"><div style="position:absolute;left:0.0px;top:0.0px;width:211.1px;height:23.0px;background:radial-gradient(ellipse 45% 55% at 22% 60%, rgba(0,0,0,0.28), rgba(0,0,0,0) 100%),linear-gradient(to right, rgba(110,160,110,0.8) 0%, rgba(85,125,88,0.7) 40%, rgba(50,65,52,0.55) 80%, rgba(40,46,42,0.5) 100%);box-shadow:inset 0 1.5px 0 rgba(255,255,255,0.3);"></div></div><svg style="position:absolute;left:1758.0px;top:1692.4px" width="18" height="16"><path d="M2,2 L6,8 L2,14" fill="none" stroke="#fff" stroke-width="1.5"/><rect x="6" y="6" width="11" height="5" rx="2" fill="#3a70e0"/></svg><div style="position:absolute;left:1779.0px;top:1692.6px;font-size:13.60px;line-height:15.64px;font-weight:bold;font-style:normal;color:#f4f4f4;white-space:nowrap;transform:scaleX(0.9000);transform-origin:0 50%;text-shadow:0 1px 1px rgba(0,0,0,0.7);">Make Vector</div><div style="position:absolute;left:1780.0px;top:1719.7px;font-size:13.20px;line-height:15.18px;font-weight:normal;font-style:normal;color:#f2f2f2;white-space:nowrap;transform:scaleX(0.9000);transform-origin:0 50%;text-shadow:0 1px 1px rgba(0,0,0,0.6);">X</div><div style="position:absolute;left:1793.5px;top:1720.8px;width:41.5px;height:17.0px;border:1px solid #cfcfcf;box-sizing:border-box;border-radius:1px;"></div><div style="position:absolute;left:1801.3px;top:1722.7px;font-size:11.50px;line-height:13.22px;font-weight:normal;font-style:normal;color:#d8d8d8;white-space:nowrap;transform:scaleX(0.9000);transform-origin:0 50%;">850.0</div><div style="position:absolute;left:1780.0px;top:1749.9px;font-size:13.20px;line-height:15.18px;font-weight:normal;font-style:normal;color:#f2f2f2;white-space:nowrap;transform:scaleX(0.9000);transform-origin:0 50%;text-shadow:0 1px 1px rgba(0,0,0,0.6);">Y</div><div style="position:absolute;left:1793.5px;top:1751.0px;width:35.0px;height:17.0px;border:1px solid #cfcfcf;box-sizing:border-box;border-radius:1px;"></div><div style="position:absolute;left:1800.9px;top:1752.9px;font-size:11.50px;line-height:13.22px;font-weight:normal;font-style:normal;color:#d8d8d8;white-space:nowrap;transform:scaleX(0.9000);transform-origin:0 50%;">10.0</div><div style="position:absolute;left:1780.0px;top:1779.7px;font-size:13.20px;line-height:15.18px;font-weight:normal;font-style:normal;color:#f2f2f2;white-space:nowrap;transform:scaleX(0.9000);transform-origin:0 50%;text-shadow:0 1px 1px rgba(0,0,0,0.6);">Z</div><div style="position:absolute;left:1861.0px;top:1720.7px;font-size:13.20px;line-height:15.18px;font-weight:normal;font-style:normal;color:#f2f2f2;white-space:nowrap;transform:scaleX(0.9000);transform-origin:0 50%;text-shadow:0 1px 1px rgba(0,0,0,0.6);">Return Value</div><div style="position:absolute;left:1747.5px;top:1831.3px;width:205.4px;height:57.2px;background:#121212;border-radius:7px;box-shadow:2px 4px 6px rgba(0,0,0,0.45);"></div><div style="position:absolute;left:1749.0px;top:1832.8px;width:202.4px;height:54.2px;background:#262826;border-radius:6px;overflow:hidden;"><div style="position:absolute;left:0.0px;top:0.0px;width:202.4px;height:22.7px;background:radial-gradient(ellipse 45% 55% at 22% 60%, rgba(0,0,0,0.28), rgba(0,0,0,0) 100%),linear-gradient(to right, rgba(115,170,115,0.85) 0%, rgba(95,140,95,0.75) 45%, rgba(55,78,57,0.6) 80%, rgba(40,48,42,0.5) 100%);box-shadow:inset 0 1.5px 0 rgba(255,255,255,0.3);"></div></div><svg style="position:absolute;left:1762.0px;top:1835.2px" width="16" height="19" viewBox="0 0 16 19"><path d="M1.2,16.2 C2.8,18.2 5.2,17.6 6.2,13.5 L8.6,4.6 C9.4,1.8 11.4,0.9 14.2,2.2" fill="none" stroke="#9be38a" stroke-width="2.1" stroke-linecap="round"/><path d="M4.6,7.6 L11.2,7.6" stroke="#9be38a" stroke-width="1.8"/></svg><div style="position:absolute;left:1779.0px;top:1836.3px;font-size:13.60px;line-height:15.64px;font-weight:bold;font-style:normal;color:#f4f4f4;white-space:nowrap;transform:scaleX(0.9000);transform-origin:0 50%;text-shadow:0 1px 1px rgba(0,0,0,0.7);">Get World Delta Seconds</div><div style="position:absolute;left:1852.0px;top:1863.9px;font-size:13.20px;line-height:15.18px;font-weight:normal;font-style:normal;color:#f2f2f2;white-space:nowrap;transform:scaleX(0.9000);transform-origin:0 50%;text-shadow:0 1px 1px rgba(0,0,0,0.6);">Return Value</div><div style="position:absolute;left:2003.4px;top:1751.5px;width:133.6px;height:35.4px;background:#111;border-radius:18.2px;box-shadow:2px 4px 6px rgba(0,0,0,0.45);"></div><div style="position:absolute;left:2004.9px;top:1753.0px;width:130.6px;height:32.4px;border-radius:16.2px;overflow:hidden;background:linear-gradient(#585858,#484848 60%,#454545);"><div style="position:absolute;left:0.0px;top:0.0px;width:130.6px;height:25.9px;background:linear-gradient(to bottom, rgba(165,225,110,0.85) 0%, rgba(110,160,80,0.55) 40%, rgba(80,110,65,0.45) 100%);-webkit-mask-image:linear-gradient(to right, rgba(0,0,0,0.25) 0%, #000 30%, #000 70%, rgba(0,0,0,0.25) 100%);"></div><div style="position:absolute;left:0.0px;top:0.0px;width:130.6px;height:32.4px;border-radius:16.2px;box-shadow:inset 0 1.5px 1px rgba(255,255,255,0.4);"></div></div><div style="position:absolute;left:2035.8px;top:1760.9px;font-size:13.20px;line-height:15.18px;font-weight:normal;font-style:normal;color:#f2f2f2;white-space:nowrap;transform:scaleX(0.9000);transform-origin:0 50%;text-shadow:0 1px 1px rgba(0,0,0,0.6);">Move Speed</div><div style="position:absolute;left:1283.2px;top:1702.8px;width:134.1px;height:35.6px;background:#111;border-radius:18.3px;box-shadow:2px 4px 6px rgba(0,0,0,0.45);"></div><div style="position:absolute;left:1284.7px;top:1704.3px;width:131.1px;height:32.6px;border-radius:16.3px;overflow:hidden;background:linear-gradient(#585858,#484848 60%,#454545);"><div style="position:absolute;left:0.0px;top:0.0px;width:131.1px;height:26.1px;background:linear-gradient(to bottom, rgba(110,190,235,0.9) 0%, rgba(60,130,170,0.6) 40%, rgba(45,85,105,0.55) 100%);-webkit-mask-image:linear-gradient(to right, rgba(0,0,0,0.25) 0%, #000 30%, #000 70%, rgba(0,0,0,0.25) 100%);"></div><div style="position:absolute;left:0.0px;top:0.0px;width:131.1px;height:32.6px;border-radius:16.3px;box-shadow:inset 0 1.5px 1px rgba(255,255,255,0.4);"></div></div><div style="position:absolute;left:1340.4px;top:1712.8px;font-size:13.20px;line-height:15.18px;font-weight:normal;font-style:normal;color:#f2f2f2;white-space:nowrap;transform:scaleX(0.9000);transform-origin:0 50%;text-shadow:0 1px 1px rgba(0,0,0,0.6);">Ball Ref</div><div style="position:absolute;left:1491.0px;top:1655.2px;width:210.8px;height:125.8px;background:#121212;border-radius:7px;box-shadow:2px 4px 6px rgba(0,0,0,0.45);"></div><div style="position:absolute;left:1492.5px;top:1656.7px;width:207.8px;height:122.8px;background:#262826;border-radius:6px;overflow:hidden;"><div style="position:absolute;left:0.0px;top:0.0px;width:207.8px;height:39.6px;background:radial-gradient(ellipse 45% 55% at 22% 60%, rgba(0,0,0,0.28), rgba(0,0,0,0) 100%),linear-gradient(to right, rgba(115,170,115,0.85) 0%, rgba(95,140,95,0.75) 45%, rgba(55,78,57,0.6) 80%, rgba(40,48,42,0.5) 100%);box-shadow:inset 0 1.5px 0 rgba(255,255,255,0.3);"></div></div><svg style="position:absolute;left:1505.5px;top:1659.7px" width="16" height="19" viewBox="0 0 16 19"><path d="M1.2,16.2 C2.8,18.2 5.2,17.6 6.2,13.5 L8.6,4.6 C9.4,1.8 11.4,0.9 14.2,2.2" fill="none" stroke="#9be38a" stroke-width="2.1" stroke-linecap="round"/><path d="M4.6,7.6 L11.2,7.6" stroke="#9be38a" stroke-width="1.8"/></svg><div style="position:absolute;left:1522.5px;top:1660.9px;font-size:13.60px;line-height:15.64px;font-weight:bold;font-style:normal;color:#f4f4f4;white-space:nowrap;transform:scaleX(0.9000);transform-origin:0 50%;text-shadow:0 1px 1px rgba(0,0,0,0.7);">GetActorLocation</div><div style="position:absolute;left:1522.5px;top:1678.6px;font-size:12.40px;line-height:14.26px;font-weight:normal;font-style:italic;color:#a9b38d;white-space:nowrap;transform:scaleX(0.9000);transform-origin:0 50%;">Target is Actor</div><div style="position:absolute;left:1524.0px;top:1703.6px;font-size:13.20px;line-height:15.18px;font-weight:normal;font-style:normal;color:#f2f2f2;white-space:nowrap;transform:scaleX(0.9000);transform-origin:0 50%;text-shadow:0 1px 1px rgba(0,0,0,0.6);">Target</div><div style="position:absolute;left:1589.8px;top:1703.6px;font-size:13.20px;line-height:15.18px;font-weight:normal;font-style:normal;color:#f2f2f2;white-space:nowrap;transform:scaleX(0.9000);transform-origin:0 50%;text-shadow:0 1px 1px rgba(0,0,0,0.6);">Return Value X</div><div style="position:absolute;left:1590.0px;top:1729.9px;font-size:13.20px;line-height:15.18px;font-weight:normal;font-style:normal;color:#f2f2f2;white-space:nowrap;transform:scaleX(0.9000);transform-origin:0 50%;text-shadow:0 1px 1px rgba(0,0,0,0.6);">Return Value Y</div><div style="position:absolute;left:1590.5px;top:1755.8px;font-size:13.20px;line-height:15.18px;font-weight:normal;font-style:normal;color:#f2f2f2;white-space:nowrap;transform:scaleX(0.9000);transform-origin:0 50%;text-shadow:0 1px 1px rgba(0,0,0,0.6);">Return Value Z</div><svg style="position:absolute;left:0;top:0" width="3584" height="2144"><circle cx="1414.6" cy="624.8" r="4.6" fill="#1c1c1c" stroke="#17a3f2" stroke-width="2"/><path d="M1420.1,621.6 L1423.6,624.8 L1420.1,628.0 Z" fill="#17a3f2"/><circle cx="1602.5" cy="624.8" r="5.6" fill="#f6bd2c"/><path d="M1608.0,621.6 L1611.5,624.8 L1608.0,628.0 Z" fill="#f6bd2c"/><circle cx="1430.0" cy="705.0" r="4.6" fill="#1c1c1c" stroke="#94e44c" stroke-width="2"/><path d="M1435.5,701.8 L1439.0,705.0 L1435.5,708.2 Z" fill="#94e44c"/><circle cx="1430.0" cy="735.0" r="4.6" fill="#1c1c1c" stroke="#94e44c" stroke-width="2"/><path d="M1435.5,731.8 L1439.0,735.0 L1435.5,738.2 Z" fill="#94e44c"/><circle cx="1430.0" cy="765.6" r="4.6" fill="#1c1c1c" stroke="#94e44c" stroke-width="2"/><path d="M1435.5,762.4 L1439.0,765.6 L1435.5,768.8 Z" fill="#94e44c"/><circle cx="1603.7" cy="705.0" r="5.6" fill="#f6bd2c"/><path d="M1609.2,701.8 L1612.7,705.0 L1609.2,708.2 Z" fill="#f6bd2c"/><circle cx="1749.5" cy="687.4" r="5.6" fill="#f6bd2c"/><path d="M1755.0,684.2 L1758.5,687.4 L1755.0,690.6 Z" fill="#f6bd2c"/><circle cx="1749.5" cy="713.6" r="5.6" fill="#f6bd2c"/><path d="M1755.0,710.4 L1758.5,713.6 L1755.0,716.8 Z" fill="#f6bd2c"/><circle cx="1749.5" cy="739.4" r="5.6" fill="#94e44c"/><path d="M1755.0,736.2 L1758.5,739.4 L1755.0,742.6 Z" fill="#94e44c"/><circle cx="1749.5" cy="765.6" r="5.6" fill="#94e44c"/><path d="M1755.0,762.4 L1758.5,765.6 L1755.0,768.8 Z" fill="#94e44c"/><circle cx="1940.6" cy="687.4" r="5.6" fill="#f6bd2c"/><path d="M1946.1,684.2 L1949.6,687.4 L1946.1,690.6 Z" fill="#f6bd2c"/><circle cx="1611.0" cy="863.5" r="5.6" fill="#94e44c"/><path d="M1616.5,860.3 L1620.0,863.5 L1616.5,866.7 Z" fill="#94e44c"/><circle cx="1472.6" cy="936.4" r="5.6" fill="#94e44c"/><path d="M1478.1,933.2 L1481.6,936.4 L1478.1,939.6 Z" fill="#94e44c"/><circle cx="1557.7" cy="934.5" r="5.6" fill="#94e44c"/><path d="M1563.2,931.3 L1566.7,934.5 L1563.2,937.7 Z" fill="#94e44c"/><circle cx="1557.7" cy="960.6" r="4.6" fill="#1c1c1c" stroke="#94e44c" stroke-width="2"/><path d="M1563.2,957.4 L1566.7,960.6 L1563.2,963.8 Z" fill="#94e44c"/><circle cx="1654.5" cy="934.5" r="5.6" fill="#94e44c"/><path d="M1660.0,931.3 L1663.5,934.5 L1660.0,937.7 Z" fill="#94e44c"/><path d="M2272.8,714.5 L2279.3,714.5 L2283.8,721.0 L2279.3,727.5 L2272.8,727.5 Z" fill="#f0f0f0" stroke="#f0f0f0" stroke-width="1.5" stroke-linejoin="round"/><path d="M2493.6,714.5 L2500.1,714.5 L2504.6,721.0 L2500.1,727.5 L2493.6,727.5 Z" fill="none" stroke="#f0f0f0" stroke-width="1.6" stroke-linejoin="round"/><circle cx="2278.0" cy="748.6" r="4.6" fill="#1c1c1c" stroke="#17a3f2" stroke-width="2"/><path d="M2283.5,745.4 L2287.0,748.6 L2283.5,751.8 Z" fill="#17a3f2"/><circle cx="2278.0" cy="777.5" r="5.6" fill="#f6bd2c"/><path d="M2283.5,774.3 L2287.0,777.5 L2283.5,780.7 Z" fill="#f6bd2c"/><circle cx="2278.0" cy="806.4" r="4.6" fill="#1c1c1c" stroke="#9c0f0f" stroke-width="2"/><path d="M2283.5,803.2 L2287.0,806.4 L2283.5,809.6 Z" fill="#9c0f0f"/><circle cx="2278.0" cy="838.0" r="4.6" fill="#1c1c1c" stroke="#9c0f0f" stroke-width="2"/><path d="M2283.5,834.8 L2287.0,838.0 L2283.5,841.2 Z" fill="#9c0f0f"/><circle cx="2496.0" cy="747.6" r="4.6" fill="#1c1c1c" stroke="#1656d0" stroke-width="2"/><path d="M2501.5,744.4 L2505.0,747.6 L2501.5,750.8 Z" fill="#1656d0"/><circle cx="2496.0" cy="773.8" r="4.6" fill="#1c1c1c" stroke="#9c0f0f" stroke-width="2"/><path d="M2501.5,770.6 L2505.0,773.8 L2501.5,777.0 Z" fill="#9c0f0f"/><path d="M790.0,1226.3 L796.5,1226.3 L801.0,1232.8 L796.5,1239.3 L790.0,1239.3 Z" fill="#f0f0f0" stroke="#f0f0f0" stroke-width="1.5" stroke-linejoin="round"/><circle cx="793.0" cy="1259.6" r="4.6" fill="#1c1c1c" stroke="#94e44c" stroke-width="2"/><path d="M798.5,1256.4 L802.0,1259.6 L798.5,1262.8 Z" fill="#94e44c"/><path d="M945.0,1226.3 L951.5,1226.3 L956.0,1232.8 L951.5,1239.3 L945.0,1239.3 Z" fill="#f0f0f0" stroke="#f0f0f0" stroke-width="1.5" stroke-linejoin="round"/><path d="M1143.6,1226.3 L1150.1,1226.3 L1154.6,1232.8 L1150.1,1239.3 L1143.6,1239.3 Z" fill="#f0f0f0" stroke="#f0f0f0" stroke-width="1.5" stroke-linejoin="round"/><circle cx="950.0" cy="1259.6" r="4.6" fill="#1c1c1c" stroke="#7a7a7a" stroke-width="2"/><path d="M955.5,1256.4 L959.0,1259.6 L955.5,1262.8 Z" fill="#7a7a7a"/><path d="M1143.6,1254.1 L1150.1,1254.1 L1154.6,1260.6 L1150.1,1267.1 L1143.6,1267.1 Z" fill="none" stroke="#f0f0f0" stroke-width="1.6" stroke-linejoin="round"/><circle cx="1146.6" cy="1287.8" r="5.6" fill="#17a3f2"/><path d="M1152.1,1284.6 L1155.6,1287.8 L1152.1,1291.0 Z" fill="#17a3f2"/><circle cx="857.0" cy="1375.5" r="4.6" fill="#1c1c1c" stroke="#17a3f2" stroke-width="2"/><path d="M862.5,1372.3 L866.0,1375.5 L862.5,1378.7 Z" fill="#17a3f2"/><circle cx="1255.9" cy="1288.8" r="5.6" fill="#17a3f2"/><path d="M1261.4,1285.6 L1264.9,1288.8 L1261.4,1292.0 Z" fill="#17a3f2"/><circle cx="1391.3" cy="1288.8" r="5.6" fill="#17a3f2"/><path d="M1396.8,1285.6 L1400.3,1288.8 L1396.8,1292.0 Z" fill="#17a3f2"/><path d="M1506.8,1226.3 L1513.3,1226.3 L1517.8,1232.8 L1513.3,1239.3 L1506.8,1239.3 Z" fill="#f0f0f0" stroke="#f0f0f0" stroke-width="1.5" stroke-linejoin="round"/><path d="M1605.0,1226.3 L1611.5,1226.3 L1616.0,1232.8 L1611.5,1239.3 L1605.0,1239.3 Z" fill="#f0f0f0" stroke="#f0f0f0" stroke-width="1.5" stroke-linejoin="round"/><circle cx="1511.8" cy="1259.6" r="5.6" fill="#17a3f2"/><path d="M1517.3,1256.4 L1520.8,1259.6 L1517.3,1262.8 Z" fill="#17a3f2"/><circle cx="1606.3" cy="1259.6" r="5.6" fill="#17a3f2"/><path d="M1611.8,1256.4 L1615.3,1259.6 L1611.8,1262.8 Z" fill="#17a3f2"/><path d="M1728.8,1226.3 L1735.3,1226.3 L1739.8,1232.8 L1735.3,1239.3 L1728.8,1239.3 Z" fill="#f0f0f0" stroke="#f0f0f0" stroke-width="1.5" stroke-linejoin="round"/><circle cx="1734.0" cy="1259.9" r="5.6" fill="#17a3f2"/><path d="M1739.5,1256.7 L1743.0,1259.9 L1739.5,1263.1 Z" fill="#17a3f2"/><path d="M1910.2,1226.3 L1916.7,1226.3 L1921.2,1232.8 L1916.7,1239.3 L1910.2,1239.3 Z" fill="#f0f0f0" stroke="#f0f0f0" stroke-width="1.5" stroke-linejoin="round"/><path d="M1910.2,1254.1 L1916.7,1254.1 L1921.2,1260.6 L1916.7,1267.1 L1910.2,1267.1 Z" fill="#f0f0f0" stroke="#f0f0f0" stroke-width="1.5" stroke-linejoin="round"/><path d="M2096.5,1226.3 L2103.0,1226.3 L2107.5,1232.8 L2103.0,1239.3 L2096.5,1239.3 Z" fill="#f0f0f0" stroke="#f0f0f0" stroke-width="1.5" stroke-linejoin="round"/><path d="M2232.5,1226.3 L2239.0,1226.3 L2243.5,1232.8 L2239.0,1239.3 L2232.5,1239.3 Z" fill="#f0f0f0" stroke="#f0f0f0" stroke-width="1.5" stroke-linejoin="round"/><circle cx="2101.5" cy="1259.9" r="5.6" fill="#9c0f0f"/><path d="M2107.0,1256.7 L2110.5,1259.9 L2107.0,1263.1 Z" fill="#9c0f0f"/><path d="M2232.5,1254.1 L2239.0,1254.1 L2243.5,1260.6 L2239.0,1267.1 L2232.5,1267.1 Z" fill="none" stroke="#f0f0f0" stroke-width="1.6" stroke-linejoin="round"/><path d="M2369.0,1226.3 L2375.5,1226.3 L2380.0,1232.8 L2375.5,1239.3 L2369.0,1239.3 Z" fill="#f0f0f0" stroke="#f0f0f0" stroke-width="1.5" stroke-linejoin="round"/><path d="M2589.5,1226.3 L2596.0,1226.3 L2600.5,1232.8 L2596.0,1239.3 L2589.5,1239.3 Z" fill="none" stroke="#f0f0f0" stroke-width="1.6" stroke-linejoin="round"/><circle cx="2374.0" cy="1261.0" r="4.6" fill="#1c1c1c" stroke="#17a3f2" stroke-width="2"/><path d="M2379.5,1257.8 L2383.0,1261.0 L2379.5,1264.2 Z" fill="#17a3f2"/><circle cx="2374.0" cy="1289.4" r="5.6" fill="#f6bd2c"/><path d="M2379.5,1286.2 L2383.0,1289.4 L2379.5,1292.6 Z" fill="#f6bd2c"/><circle cx="2374.0" cy="1318.2" r="4.6" fill="#1c1c1c" stroke="#9c0f0f" stroke-width="2"/><path d="M2379.5,1315.0 L2383.0,1318.2 L2379.5,1321.4 Z" fill="#9c0f0f"/><circle cx="2374.0" cy="1350.0" r="4.6" fill="#1c1c1c" stroke="#9c0f0f" stroke-width="2"/><path d="M2379.5,1346.8 L2383.0,1350.0 L2379.5,1353.2 Z" fill="#9c0f0f"/><circle cx="2592.0" cy="1260.0" r="4.6" fill="#1c1c1c" stroke="#1656d0" stroke-width="2"/><path d="M2597.5,1256.8 L2601.0,1260.0 L2597.5,1263.2 Z" fill="#1656d0"/><circle cx="2592.0" cy="1285.4" r="4.6" fill="#1c1c1c" stroke="#9c0f0f" stroke-width="2"/><path d="M2597.5,1282.2 L2601.0,1285.4 L2597.5,1288.6 Z" fill="#9c0f0f"/><circle cx="1606.0" cy="1375.5" r="5.6" fill="#17a3f2"/><path d="M1611.5,1372.3 L1615.0,1375.5 L1611.5,1378.7 Z" fill="#17a3f2"/><circle cx="1776.0" cy="1375.3" r="5.6" fill="#94e44c"/><path d="M1781.5,1372.1 L1785.0,1375.3 L1781.5,1378.5 Z" fill="#94e44c"/><circle cx="1776.0" cy="1401.5" r="4.6" fill="#1c1c1c" stroke="#94e44c" stroke-width="2"/><path d="M1781.5,1398.3 L1785.0,1401.5 L1781.5,1404.7 Z" fill="#94e44c"/><circle cx="1776.0" cy="1427.5" r="4.6" fill="#1c1c1c" stroke="#94e44c" stroke-width="2"/><path d="M1781.5,1424.3 L1785.0,1427.5 L1781.5,1430.7 Z" fill="#94e44c"/><circle cx="1941.0" cy="1350.0" r="5.6" fill="#94e44c"/><path d="M1946.5,1346.8 L1950.0,1350.0 L1946.5,1353.2 Z" fill="#94e44c"/><circle cx="1941.0" cy="1376.7" r="4.6" fill="#1c1c1c" stroke="#94e44c" stroke-width="2"/><path d="M1946.5,1373.5 L1950.0,1376.7 L1946.5,1379.9 Z" fill="#94e44c"/><circle cx="2034.3" cy="1365.4" r="5.6" fill="#9c0f0f"/><path d="M2039.8,1362.2 L2043.3,1365.4 L2039.8,1368.6 Z" fill="#9c0f0f"/><circle cx="1750.7" cy="1649.0" r="4.6" fill="#1c1c1c" stroke="#17a3f2" stroke-width="2"/><path d="M1756.2,1645.8 L1759.7,1649.0 L1756.2,1652.2 Z" fill="#17a3f2"/><circle cx="1939.6" cy="1649.0" r="5.6" fill="#f6bd2c"/><path d="M1945.1,1645.8 L1948.6,1649.0 L1945.1,1652.2 Z" fill="#f6bd2c"/><circle cx="2038.3" cy="1615.6" r="5.6" fill="#f6bd2c"/><path d="M2043.8,1612.4 L2047.3,1615.6 L2043.8,1618.8 Z" fill="#f6bd2c"/><circle cx="2038.3" cy="1641.7" r="5.6" fill="#f6bd2c"/><path d="M2043.8,1638.5 L2047.3,1641.7 L2043.8,1644.9 Z" fill="#f6bd2c"/><circle cx="2038.3" cy="1667.6" r="5.6" fill="#94e44c"/><path d="M2043.8,1664.4 L2047.3,1667.6 L2043.8,1670.8 Z" fill="#94e44c"/><circle cx="2038.3" cy="1693.5" r="5.6" fill="#94e44c"/><path d="M2043.8,1690.3 L2047.3,1693.5 L2043.8,1696.7 Z" fill="#94e44c"/><circle cx="2229.0" cy="1615.6" r="5.6" fill="#f6bd2c"/><path d="M2234.5,1612.4 L2238.0,1615.6 L2234.5,1618.8 Z" fill="#f6bd2c"/><circle cx="1766.4" cy="1729.3" r="4.6" fill="#1c1c1c" stroke="#94e44c" stroke-width="2"/><path d="M1771.9,1726.1 L1775.4,1729.3 L1771.9,1732.5 Z" fill="#94e44c"/><circle cx="1766.4" cy="1759.5" r="4.6" fill="#1c1c1c" stroke="#94e44c" stroke-width="2"/><path d="M1771.9,1756.3 L1775.4,1759.5 L1771.9,1762.7 Z" fill="#94e44c"/><circle cx="1766.4" cy="1787.3" r="5.6" fill="#94e44c"/><path d="M1771.9,1784.1 L1775.4,1787.3 L1771.9,1790.5 Z" fill="#94e44c"/><circle cx="1940.0" cy="1729.3" r="5.6" fill="#f6bd2c"/><path d="M1945.5,1726.1 L1949.0,1729.3 L1945.5,1732.5 Z" fill="#f6bd2c"/><circle cx="1931.0" cy="1871.5" r="5.6" fill="#94e44c"/><path d="M1936.5,1868.3 L1940.0,1871.5 L1936.5,1874.7 Z" fill="#94e44c"/><circle cx="2113.0" cy="1768.5" r="5.6" fill="#94e44c"/><path d="M2118.5,1765.3 L2122.0,1768.5 L2118.5,1771.7 Z" fill="#94e44c"/><circle cx="1392.9" cy="1720.4" r="5.6" fill="#17a3f2"/><path d="M1398.4,1717.2 L1401.9,1720.4 L1398.4,1723.6 Z" fill="#17a3f2"/><circle cx="1510.2" cy="1711.2" r="5.6" fill="#17a3f2"/><path d="M1515.7,1708.0 L1519.2,1711.2 L1515.7,1714.4 Z" fill="#17a3f2"/><circle cx="1680.4" cy="1711.2" r="4.6" fill="#1c1c1c" stroke="#94e44c" stroke-width="2"/><path d="M1685.9,1708.0 L1689.4,1711.2 L1685.9,1714.4 Z" fill="#94e44c"/><circle cx="1680.4" cy="1737.5" r="4.6" fill="#1c1c1c" stroke="#94e44c" stroke-width="2"/><path d="M1685.9,1734.3 L1689.4,1737.5 L1685.9,1740.7 Z" fill="#94e44c"/><circle cx="1680.4" cy="1763.4" r="5.6" fill="#94e44c"/><path d="M1685.9,1760.2 L1689.4,1763.4 L1685.9,1766.6 Z" fill="#94e44c"/></svg><div style="position:absolute;left:2560.0px;top:345.0px;width:62.0px;height:1646.0px;background:linear-gradient(to right, rgba(0,0,0,0), rgba(0,0,0,0.18));"></div><div style="position:absolute;left:628.0px;top:345.0px;width:1994.0px;height:83.0px;background:rgba(0,0,0,0.48);"></div><svg style="position:absolute;left:641px;top:366px" width="40" height="40"><path d="M20,3 L24.5,15 L37,15.5 L27,23.5 L30.5,36 L20,29 L9.5,36 L13,23.5 L3,15.5 L15.5,15 Z" fill="none" stroke="#d8d8d8" stroke-width="2.5" stroke-linejoin="round"/></svg><div style="position:absolute;left:694.0px;top:351.0px;width:3.0px;height:72.0px;background:#555;"></div><div style="position:absolute;left:868.0px;top:351.0px;width:3.0px;height:72.0px;background:#555;"></div><svg style="position:absolute;left:716px;top:362px" width="40" height="48"><path d="M4,22 L22,4 L22,14 L34,14 L34,30 L22,30 L22,40 Z" fill="#8a8a8a"/></svg><svg style="position:absolute;left:801px;top:362px" width="40" height="48"><path d="M36,22 L18,4 L18,14 L6,14 L6,30 L18,30 L18,40 Z" fill="#8a8a8a"/></svg><svg style="position:absolute;left:891px;top:366px" width="50" height="40" viewBox="0 0 50 40"><rect x="12" y="2" width="14" height="11" fill="#b8c8f0"/><rect x="32" y="2" width="14" height="11" fill="#b8c8f0"/><rect x="2" y="18" width="22" height="16" fill="#8aa0e0"/><rect x="32" y="20" width="14" height="11" fill="#9ab0e8"/><path d="M26,8 L32,8 M39,13 L39,20 M24,25 L32,25" stroke="#8aa0e0" stroke-width="2"/></svg><div style="position:absolute;left:970.0px;top:364.7px;font-size:37.00px;line-height:42.55px;font-weight:normal;font-style:normal;color:#a8a8a8;white-space:nowrap;transform:scaleX(0.9764);transform-origin:0 50%;">BP_Paddle_AI</div><svg style="position:absolute;left:1216px;top:372px" width="22" height="30"><path d="M4,3 L16,15 L4,27" fill="none" stroke="#a8a8a8" stroke-width="4"/></svg><div style="position:absolute;left:1256.0px;top:364.7px;font-size:37.00px;line-height:42.55px;font-weight:normal;font-style:normal;color:#a8a8a8;white-space:nowrap;transform:scaleX(0.9917);transform-origin:0 50%;">Event Graph</div><div style="position:absolute;left:2473.0px;top:356.4px;font-size:41.00px;line-height:47.15px;font-weight:bold;font-style:normal;color:#303030;white-space:nowrap;transform:scaleX(0.8655);transform-origin:0 50%;">Zoom -4</div></div></div></body></html>
